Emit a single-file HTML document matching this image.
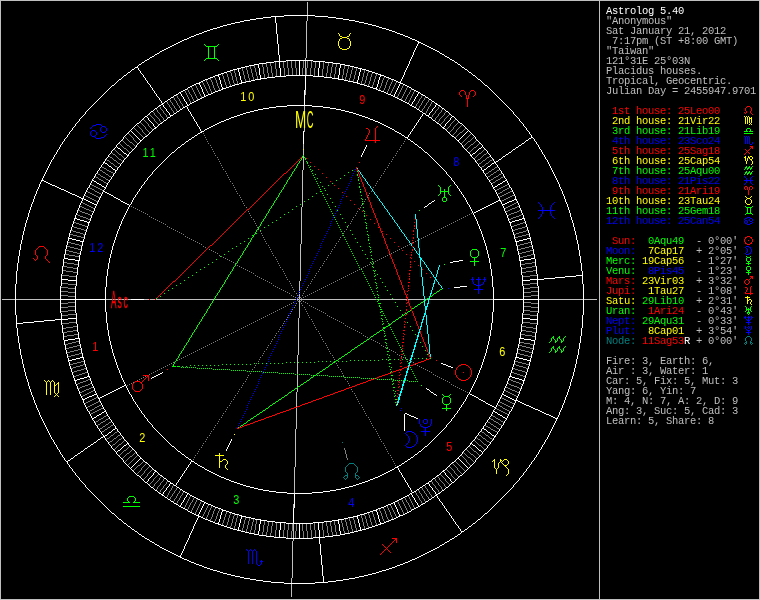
<!DOCTYPE html>
<html lang="en"><head><meta charset="utf-8"><title>Astrolog 5.40</title>
<style>
html,body{margin:0;padding:0;background:#000;}
body{width:760px;height:600px;position:relative;overflow:hidden;}
svg{will-change:transform;position:absolute;left:0;top:0;display:block}
#side{will-change:transform;position:absolute;left:605.5px;top:6.3px;width:154px;height:590px;font:10.5px/10px "Liberation Mono",monospace;letter-spacing:-0.3px;color:#bfbfbf;}
.ln{position:absolute;left:0;white-space:pre;height:10px;}
.cw{color:#ffffff}
.cl{color:#bfbfbf}
.cg{color:#7f7f7f}
.cr{color:#ff0000}
.cG{color:#00ff00}
.cy{color:#ffff00}
.cb{color:#0000ff}
.cc{color:#00ffff}
.cC{color:#007f7f}
.cm{color:#ff00ff}
.hn{font:13px "Liberation Sans",sans-serif;letter-spacing:2.29px}
.big{font-family:"Liberation Sans",sans-serif}
</style></head><body>
<svg width="760" height="600" viewBox="0 0 760 600" shape-rendering="crispEdges" fill="none" stroke-width="1">
<path stroke="#ffffff" d="M284 15.5h31M271 16.5h13M315 16.5h13M263 17.5h8M328 17.5h8M256 18.5h7M336 18.5h7M250 19.5h6M343 19.5h6M244 20.5h6M349 20.5h6M240 21.5h4M355 21.5h4M235 22.5h5M359 22.5h5M231 23.5h4M364 23.5h4M227 24.5h4M368 24.5h4M223 25.5h4M372 25.5h4M220 26.5h3M376 26.5h3M217 27.5h3M379 27.5h3M213 28.5h4M382 28.5h4M210 29.5h3M386 29.5h3M207 30.5h3M389 30.5h3M204 31.5h3M392 31.5h3M202 32.5h2M395 32.5h2M199 33.5h3M397 33.5h3M196 34.5h3M400 34.5h3M194 35.5h2M403 35.5h2M191 36.5h3M405 36.5h3M189 37.5h2M408 37.5h2M187 38.5h2M410 38.5h2M184 39.5h3M412 39.5h3M182 40.5h2M415 40.5h2M180 41.5h2M417 41.5h1M178 42.5h2M418 42.5h3M176 43.5h2M421 43.5h2M174 44.5h2M423 44.5h2M172 45.5h2M425 45.5h2M170 46.5h2M427 46.5h2M168 47.5h2M429 47.5h2M166 48.5h2M431 48.5h2M164 49.5h2M433 49.5h2M162 50.5h2M435 50.5h2M160 51.5h2M437 51.5h2M159 52.5h1M439 52.5h1M157 53.5h2M440 53.5h2M155 54.5h2M442 54.5h2M154 55.5h1M444 55.5h1M152 56.5h2M445 56.5h2M150 57.5h2M447 57.5h2M149 58.5h1M449 58.5h1M147 59.5h2M450 59.5h2M145 60.5h2M286 60.5h27M452 60.5h2M144 61.5h1M274 61.5h5M280 61.5h6M313 61.5h12M454 61.5h1M142 62.5h2M266 62.5h8M325 62.5h8M455 62.5h2M141 63.5h1M259 63.5h7M333 63.5h7M457 63.5h1M139 64.5h2M254 64.5h5M340 64.5h5M458 64.5h2M138 65.5h1M249 65.5h5M345 65.5h5M460 65.5h1M245 66.5h4M350 66.5h4M461 66.5h1M135 67.5h3M241 67.5h4M354 67.5h4M462 67.5h2M134 68.5h1M237 68.5h4M358 68.5h4M464 68.5h1M132 69.5h2M233 69.5h4M362 69.5h4M465 69.5h2M131 70.5h1M139 70.5h1M230 70.5h3M366 70.5h3M467 70.5h1M130 71.5h1M227 71.5h3M369 71.5h3M468 71.5h1M128 72.5h2M224 72.5h3M372 72.5h3M469 72.5h2M127 73.5h1M141 73.5h1M221 73.5h3M375 73.5h3M471 73.5h1M126 74.5h1M142 74.5h1M218 74.5h3M378 74.5h3M472 74.5h1M124 75.5h2M215 75.5h4M286 75.5h27M380 75.5h4M473 75.5h2M123 76.5h1M213 76.5h2M275 76.5h11M313 76.5h11M384 76.5h2M475 76.5h1M122 77.5h1M144 77.5h1M210 77.5h3M267 77.5h8M324 77.5h8M386 77.5h3M476 77.5h1M121 78.5h1M208 78.5h2M260 78.5h7M332 78.5h7M389 78.5h2M477 78.5h1M119 79.5h2M205 79.5h3M255 79.5h6M338 79.5h6M391 79.5h3M478 79.5h2M118 80.5h1M146 80.5h1M203 80.5h2M251 80.5h4M344 80.5h4M394 80.5h2M480 80.5h1M117 81.5h1M201 81.5h2M246 81.5h5M348 81.5h5M396 81.5h2M481 81.5h1M116 82.5h1M200 82.5h1M241 82.5h5M353 82.5h5M398 82.5h3M482 82.5h1M115 83.5h1M148 83.5h1M196 83.5h4M239 83.5h2M358 83.5h2M400 83.5h3M483 83.5h1M114 84.5h1M149 84.5h1M194 84.5h2M235 84.5h4M360 84.5h4M403 84.5h2M484 84.5h1M112 85.5h2M192 85.5h2M232 85.5h3M364 85.5h3M405 85.5h2M485 85.5h2M111 86.5h1M190 86.5h2M229 86.5h3M367 86.5h3M407 86.5h2M487 86.5h1M110 87.5h1M151 87.5h1M188 87.5h2M226 87.5h3M370 87.5h3M409 87.5h2M488 87.5h1M109 88.5h1M187 88.5h1M222 88.5h4M373 88.5h4M411 88.5h1M489 88.5h1M108 89.5h1M185 89.5h2M221 89.5h1M377 89.5h1M412 89.5h2M490 89.5h1M107 90.5h1M153 90.5h1M183 90.5h2M218 90.5h3M378 90.5h3M414 90.5h2M491 90.5h1M106 91.5h1M181 91.5h2M215 91.5h3M381 91.5h3M416 91.5h2M492 91.5h1M105 92.5h1M179 92.5h2M213 92.5h2M384 92.5h2M418 92.5h2M493 92.5h1M104 93.5h1M155 93.5h1M178 93.5h1M211 93.5h2M386 93.5h2M420 93.5h1M494 93.5h1M103 94.5h1M176 94.5h2M208 94.5h3M388 94.5h3M421 94.5h2M495 94.5h1M102 95.5h1M174 95.5h2M206 95.5h2M391 95.5h2M423 95.5h2M496 95.5h1M101 96.5h1M157 96.5h1M173 96.5h1M182 96.5h1M205 96.5h1M393 96.5h1M416 96.5h1M425 96.5h1M497 96.5h1M100 97.5h1M158 97.5h1M171 97.5h2M202 97.5h2M395 97.5h2M426 97.5h2M498 97.5h1M99 98.5h1M170 98.5h1M200 98.5h2M397 98.5h2M428 98.5h1M499 98.5h1M98 99.5h1M168 99.5h2M198 99.5h2M399 99.5h2M429 99.5h2M500 99.5h1M97 100.5h1M160 100.5h1M167 100.5h1M196 100.5h2M401 100.5h2M431 100.5h1M501 100.5h1M96 101.5h1M165 101.5h2M185 101.5h1M194 101.5h2M403 101.5h2M413 101.5h1M432 101.5h2M502 101.5h1M95 102.5h1M164 102.5h1M192 102.5h2M405 102.5h2M434 102.5h1M503 102.5h1M94 103.5h1M162 103.5h2M190 103.5h2M407 103.5h2M435 103.5h2M504 103.5h1M93 104.5h1M161 104.5h2M189 104.5h1M409 104.5h1M436 104.5h2M505 104.5h1M92 105.5h1M159 105.5h2M187 105.5h2M287 105.5h25M410 105.5h2M438 105.5h2M506 105.5h1M91 106.5h1M158 106.5h1M185 106.5h2M276 106.5h11M312 106.5h11M412 106.5h2M440 106.5h1M507 106.5h1M90 107.5h1M157 107.5h1M164 107.5h1M183 107.5h2M269 107.5h7M323 107.5h7M414 107.5h2M434 107.5h1M441 107.5h1M508 107.5h1M89 108.5h1M155 108.5h2M165 108.5h1M182 108.5h1M263 108.5h6M330 108.5h6M416 108.5h1M433 108.5h1M442 108.5h2M509 108.5h1M88 109.5h1M154 109.5h1M180 109.5h2M258 109.5h5M336 109.5h5M417 109.5h2M444 109.5h1M510 109.5h1M87 110.5h1M153 110.5h1M179 110.5h1M254 110.5h4M341 110.5h4M419 110.5h1M445 110.5h1M511 110.5h1M86 111.5h1M151 111.5h2M167 111.5h1M177 111.5h2M189 111.5h1M250 111.5h4M345 111.5h4M420 111.5h2M431 111.5h1M446 111.5h2M512 111.5h1M150 112.5h1M168 112.5h1M176 112.5h1M246 112.5h4M349 112.5h4M422 112.5h1M430 112.5h1M448 112.5h1M149 113.5h1M174 113.5h2M243 113.5h3M353 113.5h3M423 113.5h2M449 113.5h1M84 114.5h1M148 114.5h1M173 114.5h1M240 114.5h3M356 114.5h3M425 114.5h1M450 114.5h1M514 114.5h1M83 115.5h1M147 115.5h1M170 115.5h3M237 115.5h3M359 115.5h3M426 115.5h3M451 115.5h1M515 115.5h1M82 116.5h1M145 116.5h2M192 116.5h1M234 116.5h3M362 116.5h3M421 116.5h1M452 116.5h2M516 116.5h1M81 117.5h1M144 117.5h1M147 117.5h1M168 117.5h2M231 117.5h3M365 117.5h3M429 117.5h2M451 117.5h1M454 117.5h1M517 117.5h1M80 118.5h1M143 118.5h1M167 118.5h1M229 118.5h2M368 118.5h2M431 118.5h1M455 118.5h1M518 118.5h1M142 119.5h1M166 119.5h1M226 119.5h3M370 119.5h3M419 119.5h1M432 119.5h1M456 119.5h1M141 120.5h1M149 120.5h1M164 120.5h2M224 120.5h2M373 120.5h2M433 120.5h2M449 120.5h1M457 120.5h1M78 121.5h1M140 121.5h1M150 121.5h1M163 121.5h1M195 121.5h1M221 121.5h3M375 121.5h3M435 121.5h1M448 121.5h1M458 121.5h1M520 121.5h1M77 122.5h1M139 122.5h1M151 122.5h1M162 122.5h1M219 122.5h2M378 122.5h2M417 122.5h1M436 122.5h1M447 122.5h1M459 122.5h1M521 122.5h1M76 123.5h1M137 123.5h2M152 123.5h1M160 123.5h2M217 123.5h2M380 123.5h2M437 123.5h2M446 123.5h1M460 123.5h2M522 123.5h1M136 124.5h1M159 124.5h1M215 124.5h2M382 124.5h2M439 124.5h1M462 124.5h1M135 125.5h1M158 125.5h1M213 125.5h2M384 125.5h2M415 125.5h1M440 125.5h1M463 125.5h1M74 126.5h1M134 126.5h1M154 126.5h1M157 126.5h1M198 126.5h1M211 126.5h2M386 126.5h2M441 126.5h1M444 126.5h1M464 126.5h1M524 126.5h1M73 127.5h1M133 127.5h1M155 127.5h2M209 127.5h2M388 127.5h2M442 127.5h2M465 127.5h1M525 127.5h1M132 128.5h1M154 128.5h2M207 128.5h2M390 128.5h2M413 128.5h1M443 128.5h2M466 128.5h1M131 129.5h1M153 129.5h1M205 129.5h2M392 129.5h2M445 129.5h1M467 129.5h1M71 130.5h1M130 130.5h1M152 130.5h1M204 130.5h1M394 130.5h1M446 130.5h1M468 130.5h1M527 130.5h1M70 131.5h1M129 131.5h1M131 131.5h1M151 131.5h1M201 131.5h3M395 131.5h2M411 131.5h1M447 131.5h1M467 131.5h1M469 131.5h1M528 131.5h1M128 132.5h1M132 132.5h1M150 132.5h1M200 132.5h2M397 132.5h2M448 132.5h1M466 132.5h1M470 132.5h1M127 133.5h1M133 133.5h1M149 133.5h1M198 133.5h2M399 133.5h2M449 133.5h1M465 133.5h1M471 133.5h1M68 134.5h1M126 134.5h1M134 134.5h1M148 134.5h1M197 134.5h1M401 134.5h1M409 134.5h1M450 134.5h1M464 134.5h1M472 134.5h1M530 134.5h1M125 135.5h1M135 135.5h1M147 135.5h1M195 135.5h2M402 135.5h2M451 135.5h1M463 135.5h1M473 135.5h1M124 136.5h1M136 136.5h1M145 136.5h2M194 136.5h1M404 136.5h1M452 136.5h2M462 136.5h1M474 136.5h1M66 137.5h1M137 137.5h1M144 137.5h1M192 137.5h2M405 137.5h3M454 137.5h1M461 137.5h1M532 137.5h1M65 138.5h1M138 138.5h1M143 138.5h1M191 138.5h1M455 138.5h1M460 138.5h1M529 138.5h2M533 138.5h1M122 139.5h1M139 139.5h1M142 139.5h1M189 139.5h2M408 139.5h2M456 139.5h1M459 139.5h1M476 139.5h1M528 139.5h1M121 140.5h1M140 140.5h2M188 140.5h1M410 140.5h1M457 140.5h2M477 140.5h1M526 140.5h2M63 141.5h1M120 141.5h1M186 141.5h2M411 141.5h2M478 141.5h1M525 141.5h1M535 141.5h1M119 142.5h1M139 142.5h1M185 142.5h1M413 142.5h1M459 142.5h1M479 142.5h1M524 142.5h1M118 143.5h1M138 143.5h1M184 143.5h1M414 143.5h1M460 143.5h1M480 143.5h1M522 143.5h2M61 144.5h1M117 144.5h1M137 144.5h1M182 144.5h2M415 144.5h2M461 144.5h1M481 144.5h1M521 144.5h1M537 144.5h1M181 145.5h1M417 145.5h1M519 145.5h2M180 146.5h1M418 146.5h1M518 146.5h1M115 147.5h1M117 147.5h1M135 147.5h1M178 147.5h2M419 147.5h2M463 147.5h1M481 147.5h1M483 147.5h1M516 147.5h2M114 148.5h1M118 148.5h2M134 148.5h1M177 148.5h1M421 148.5h1M464 148.5h1M479 148.5h2M484 148.5h1M515 148.5h1M58 149.5h1M113 149.5h1M120 149.5h1M133 149.5h1M176 149.5h1M422 149.5h1M465 149.5h1M478 149.5h1M485 149.5h1M513 149.5h2M540 149.5h1M112 150.5h1M121 150.5h1M132 150.5h1M175 150.5h1M423 150.5h1M466 150.5h1M477 150.5h1M486 150.5h1M512 150.5h1M122 151.5h1M131 151.5h1M174 151.5h1M424 151.5h1M467 151.5h1M476 151.5h1M511 151.5h1M123 152.5h1M130 152.5h1M172 152.5h2M425 152.5h2M468 152.5h1M475 152.5h1M509 152.5h2M110 153.5h1M124 153.5h2M129 153.5h1M171 153.5h1M427 153.5h1M469 153.5h1M473 153.5h2M488 153.5h1M508 153.5h1M55 154.5h1M109 154.5h1M126 154.5h1M170 154.5h1M428 154.5h1M472 154.5h1M489 154.5h1M506 154.5h2M543 154.5h1M127 155.5h2M169 155.5h1M429 155.5h1M470 155.5h2M505 155.5h1M168 156.5h1M430 156.5h1M503 156.5h2M107 157.5h1M126 157.5h1M167 157.5h1M431 157.5h1M472 157.5h1M491 157.5h1M502 157.5h1M106 158.5h1M125 158.5h1M166 158.5h1M432 158.5h1M473 158.5h1M492 158.5h1M501 158.5h1M52 159.5h1M124 159.5h1M165 159.5h1M433 159.5h1M474 159.5h1M499 159.5h2M546 159.5h1M164 160.5h1M434 160.5h1M498 160.5h1M163 161.5h1M435 161.5h1M496 161.5h2M103 162.5h2M122 162.5h1M162 162.5h1M436 162.5h1M476 162.5h1M494 162.5h2M105 163.5h2M121 163.5h1M161 163.5h1M437 163.5h1M477 163.5h1M492 163.5h2M102 164.5h1M107 164.5h1M160 164.5h1M438 164.5h1M491 164.5h1M496 164.5h1M108 165.5h1M159 165.5h1M439 165.5h1M490 165.5h1M109 166.5h2M119 166.5h1M158 166.5h1M440 166.5h1M479 166.5h1M488 166.5h2M100 167.5h1M111 167.5h1M118 167.5h1M157 167.5h1M441 167.5h1M480 167.5h1M487 167.5h1M498 167.5h1M112 168.5h1M156 168.5h1M442 168.5h1M486 168.5h1M113 169.5h2M155 169.5h1M443 169.5h1M484 169.5h2M98 170.5h1M116 170.5h1M154 170.5h1M444 170.5h1M482 170.5h1M500 170.5h1M153 171.5h1M445 171.5h1M96 173.5h1M114 173.5h1M484 173.5h1M502 173.5h1M151 174.5h1M447 174.5h1M150 175.5h1M448 175.5h1M112 176.5h1M149 176.5h1M449 176.5h1M486 176.5h1M148 177.5h1M450 177.5h1M93 178.5h1M505 178.5h1M110 179.5h1M488 179.5h1M41 180.5h3M92 180.5h2M146 180.5h1M452 180.5h1M505 180.5h2M44 181.5h2M94 181.5h2M145 181.5h1M453 181.5h1M503 181.5h2M46 182.5h2M96 182.5h1M108 182.5h1M490 182.5h1M502 182.5h1M48 183.5h2M97 183.5h2M500 183.5h2M50 184.5h2M99 184.5h2M143 184.5h1M455 184.5h1M498 184.5h2M52 185.5h3M101 185.5h1M142 185.5h1M456 185.5h1M497 185.5h1M55 186.5h2M102 186.5h2M495 186.5h2M57 187.5h2M88 187.5h1M104 187.5h2M493 187.5h2M510 187.5h1M59 188.5h2M140 188.5h1M458 188.5h1M61 189.5h3M104 189.5h1M494 189.5h1M64 190.5h2M66 191.5h2M103 191.5h2M138 191.5h1M460 191.5h1M68 192.5h2M105 192.5h2M70 193.5h2M107 193.5h2M72 194.5h3M109 194.5h2M136 194.5h1M462 194.5h1M75 195.5h2M111 195.5h2M77 196.5h2M113 196.5h1M79 197.5h2M114 197.5h2M134 197.5h1M464 197.5h1M81 198.5h3M116 198.5h2M84 199.5h2M118 199.5h2M514 199.5h1M516 199.5h1M86 200.5h2M120 200.5h1M434 200.5h1M498 200.5h3M512 200.5h2M88 201.5h2M121 201.5h2M432 201.5h2M496 201.5h2M509 201.5h3M90 202.5h2M123 202.5h2M431 202.5h1M494 202.5h2M507 202.5h2M92 203.5h2M125 203.5h2M429 203.5h2M492 203.5h2M505 203.5h2M94 204.5h3M127 204.5h2M130 204.5h1M428 204.5h1M468 204.5h1M490 204.5h2M502 204.5h3M427 205.5h1M488 205.5h2M425 206.5h2M486 206.5h2M424 207.5h1M484 207.5h2M482 208.5h2M480 209.5h2M478 210.5h2M476 211.5h2M474 212.5h2M74 218.5h1M76 218.5h1M522 218.5h1M524 218.5h1M77 219.5h3M519 219.5h3M80 220.5h4M515 220.5h4M84 221.5h3M512 221.5h3M87 222.5h1M89 222.5h1M509 222.5h1M511 222.5h1M68 238.5h4M527 238.5h4M72 239.5h4M523 239.5h4M76 240.5h4M519 240.5h4M80 241.5h2M83 241.5h1M515 241.5h1M517 241.5h2M65 258.5h3M531 258.5h3M68 259.5h7M524 259.5h7M75 260.5h3M459 260.5h4M521 260.5h3M453 261.5h6M450 262.5h3M576 275.5h6M565 276.5h11M555 277.5h10M544 278.5h11M62 279.5h6M530 279.5h14M68 280.5h8M523 280.5h7M460 286.5h7M454 287.5h6M60 299.5h46M131 299.5h13M493 299.5h46M68 318.5h8M523 318.5h7M55 319.5h13M530 319.5h7M44 320.5h11M34 321.5h10M23 322.5h11M17 323.5h6M75 338.5h3M521 338.5h3M68 339.5h7M524 339.5h7M65 340.5h3M531 340.5h3M80 357.5h2M83 357.5h1M515 357.5h1M517 357.5h2M76 358.5h4M519 358.5h4M72 359.5h4M523 359.5h4M68 360.5h4M527 360.5h4M441 363.5h2M443 364.5h3M446 365.5h2M448 366.5h3M451 367.5h2M162 372.5h1M160 373.5h2M158 374.5h2M156 375.5h2M87 376.5h1M89 376.5h1M154 376.5h2M509 376.5h1M511 376.5h1M84 377.5h3M152 377.5h2M512 377.5h3M80 378.5h4M151 378.5h1M515 378.5h4M77 379.5h3M519 379.5h3M74 380.5h1M76 380.5h1M522 380.5h1M524 380.5h1M124 385.5h2M122 386.5h2M120 387.5h2M118 388.5h2M426 388.5h1M116 389.5h2M427 389.5h2M114 390.5h2M429 390.5h1M112 391.5h2M430 391.5h1M110 392.5h2M431 392.5h2M108 393.5h2M433 393.5h1M94 394.5h3M106 394.5h2M130 394.5h1M434 394.5h2M468 394.5h1M470 394.5h2M502 394.5h2M92 395.5h2M104 395.5h2M436 395.5h1M472 395.5h2M504 395.5h2M89 396.5h3M102 396.5h2M474 396.5h2M506 396.5h2M87 397.5h2M100 397.5h2M476 397.5h2M508 397.5h2M85 398.5h2M98 398.5h1M478 398.5h1M510 398.5h2M82 399.5h1M84 399.5h1M479 399.5h2M512 399.5h2M481 400.5h2M514 400.5h4M134 401.5h1M464 401.5h1M483 401.5h2M518 401.5h2M485 402.5h1M520 402.5h2M486 403.5h2M522 403.5h2M136 404.5h1M462 404.5h1M488 404.5h2M524 404.5h2M490 405.5h2M526 405.5h3M492 406.5h2M529 406.5h2M138 407.5h1M460 407.5h1M494 407.5h2M531 407.5h2M533 408.5h2M104 409.5h1M494 409.5h1M535 409.5h3M140 410.5h1M458 410.5h1M538 410.5h2M88 411.5h1M104 411.5h2M493 411.5h2M510 411.5h1M540 411.5h2M102 412.5h2M495 412.5h2M542 412.5h2M101 413.5h1M142 413.5h1M405 413.5h2M456 413.5h1M497 413.5h1M544 413.5h2M99 414.5h2M143 414.5h1M407 414.5h2M455 414.5h1M498 414.5h2M546 414.5h3M97 415.5h2M409 415.5h2M500 415.5h2M549 415.5h2M96 416.5h1M108 416.5h1M411 416.5h3M490 416.5h1M502 416.5h1M551 416.5h2M94 417.5h2M145 417.5h1M414 417.5h2M453 417.5h1M503 417.5h2M553 417.5h2M92 418.5h2M146 418.5h1M416 418.5h2M452 418.5h1M505 418.5h2M555 418.5h3M110 419.5h1M488 419.5h1M93 420.5h1M505 420.5h1M148 421.5h1M450 421.5h1M112 422.5h1M149 422.5h1M449 422.5h1M486 422.5h1M150 423.5h1M448 423.5h1M151 424.5h1M447 424.5h1M96 425.5h1M114 425.5h1M484 425.5h1M502 425.5h1M153 427.5h1M445 427.5h1M98 428.5h1M116 428.5h1M154 428.5h1M444 428.5h1M482 428.5h1M500 428.5h1M113 429.5h2M155 429.5h1M443 429.5h1M484 429.5h2M112 430.5h1M156 430.5h1M442 430.5h1M486 430.5h1M100 431.5h1M111 431.5h1M118 431.5h1M157 431.5h1M441 431.5h1M480 431.5h1M487 431.5h1M498 431.5h1M109 432.5h2M119 432.5h1M158 432.5h1M440 432.5h1M479 432.5h1M488 432.5h2M108 433.5h1M159 433.5h1M439 433.5h1M490 433.5h1M102 434.5h1M107 434.5h1M160 434.5h1M438 434.5h1M491 434.5h1M496 434.5h1M105 435.5h2M121 435.5h1M161 435.5h1M437 435.5h1M477 435.5h1M492 435.5h2M103 436.5h2M122 436.5h1M162 436.5h1M436 436.5h1M476 436.5h1M494 436.5h2M101 437.5h2M163 437.5h1M435 437.5h1M100 438.5h1M164 438.5h1M434 438.5h1M52 439.5h1M98 439.5h2M124 439.5h1M165 439.5h1M433 439.5h1M474 439.5h1M546 439.5h1M97 440.5h1M106 440.5h1M125 440.5h1M166 440.5h1M432 440.5h1M473 440.5h1M492 440.5h1M96 441.5h1M107 441.5h1M126 441.5h1M167 441.5h1M431 441.5h1M472 441.5h1M491 441.5h1M94 442.5h2M168 442.5h1M430 442.5h1M93 443.5h1M127 443.5h2M169 443.5h1M429 443.5h1M470 443.5h2M55 444.5h1M91 444.5h2M109 444.5h1M126 444.5h1M170 444.5h1M428 444.5h1M472 444.5h1M489 444.5h1M543 444.5h1M90 445.5h1M110 445.5h1M124 445.5h2M129 445.5h1M171 445.5h1M427 445.5h1M469 445.5h1M473 445.5h2M488 445.5h1M88 446.5h2M123 446.5h1M130 446.5h1M172 446.5h2M425 446.5h2M468 446.5h1M475 446.5h1M87 447.5h1M122 447.5h1M131 447.5h1M174 447.5h1M424 447.5h1M467 447.5h1M476 447.5h1M85 448.5h2M112 448.5h1M121 448.5h1M132 448.5h1M175 448.5h1M423 448.5h1M466 448.5h1M477 448.5h1M486 448.5h1M58 449.5h1M84 449.5h1M113 449.5h1M120 449.5h1M133 449.5h1M176 449.5h1M422 449.5h1M465 449.5h1M478 449.5h1M485 449.5h1M540 449.5h1M83 450.5h1M114 450.5h1M118 450.5h2M134 450.5h1M177 450.5h1M421 450.5h1M464 450.5h1M479 450.5h2M484 450.5h1M81 451.5h2M115 451.5h1M117 451.5h1M135 451.5h1M178 451.5h2M419 451.5h2M463 451.5h1M481 451.5h1M483 451.5h1M80 452.5h1M180 452.5h1M418 452.5h1M78 453.5h2M181 453.5h1M417 453.5h1M61 454.5h1M77 454.5h1M117 454.5h1M137 454.5h1M182 454.5h2M415 454.5h2M461 454.5h1M481 454.5h1M537 454.5h1M75 455.5h2M118 455.5h1M138 455.5h1M184 455.5h1M414 455.5h1M460 455.5h1M480 455.5h1M74 456.5h1M119 456.5h1M139 456.5h1M185 456.5h1M413 456.5h1M459 456.5h1M479 456.5h1M63 457.5h1M73 457.5h1M120 457.5h1M186 457.5h2M411 457.5h2M478 457.5h1M535 457.5h1M71 458.5h2M121 458.5h1M140 458.5h2M188 458.5h1M410 458.5h1M457 458.5h2M477 458.5h1M70 459.5h1M122 459.5h1M139 459.5h1M142 459.5h1M189 459.5h2M408 459.5h2M456 459.5h1M459 459.5h1M476 459.5h1M65 460.5h1M68 460.5h2M138 460.5h1M143 460.5h1M407 460.5h1M455 460.5h1M460 460.5h1M533 460.5h1M66 461.5h1M137 461.5h1M144 461.5h1M191 461.5h3M405 461.5h2M454 461.5h1M461 461.5h1M532 461.5h1M124 462.5h1M136 462.5h1M145 462.5h2M194 462.5h1M404 462.5h1M452 462.5h2M462 462.5h1M474 462.5h1M125 463.5h1M135 463.5h1M147 463.5h1M195 463.5h2M402 463.5h2M451 463.5h1M463 463.5h1M473 463.5h1M68 464.5h1M126 464.5h1M134 464.5h1M148 464.5h1M189 464.5h1M197 464.5h1M401 464.5h1M450 464.5h1M464 464.5h1M472 464.5h1M530 464.5h1M127 465.5h1M133 465.5h1M149 465.5h1M198 465.5h2M399 465.5h2M449 465.5h1M465 465.5h1M471 465.5h1M128 466.5h1M132 466.5h1M150 466.5h1M200 466.5h2M397 466.5h2M448 466.5h1M466 466.5h1M470 466.5h1M70 467.5h1M129 467.5h1M131 467.5h1M151 467.5h1M187 467.5h1M202 467.5h2M395 467.5h3M447 467.5h1M467 467.5h1M469 467.5h1M528 467.5h1M71 468.5h1M130 468.5h1M152 468.5h1M204 468.5h1M394 468.5h1M446 468.5h1M468 468.5h1M527 468.5h1M131 469.5h1M153 469.5h1M205 469.5h2M392 469.5h2M445 469.5h1M467 469.5h1M132 470.5h1M154 470.5h2M185 470.5h1M207 470.5h2M390 470.5h2M443 470.5h2M466 470.5h1M73 471.5h1M133 471.5h1M155 471.5h2M209 471.5h2M388 471.5h2M442 471.5h2M465 471.5h1M525 471.5h1M74 472.5h1M134 472.5h1M154 472.5h1M157 472.5h1M211 472.5h2M386 472.5h2M400 472.5h1M441 472.5h1M444 472.5h1M464 472.5h1M524 472.5h1M135 473.5h1M158 473.5h1M183 473.5h1M213 473.5h2M384 473.5h2M440 473.5h1M463 473.5h1M136 474.5h1M159 474.5h1M215 474.5h2M382 474.5h2M439 474.5h1M462 474.5h1M76 475.5h1M137 475.5h2M152 475.5h1M160 475.5h2M217 475.5h2M380 475.5h2M437 475.5h2M446 475.5h1M460 475.5h2M522 475.5h1M77 476.5h1M139 476.5h1M151 476.5h1M162 476.5h1M181 476.5h1M219 476.5h2M378 476.5h2M436 476.5h1M447 476.5h1M459 476.5h1M521 476.5h1M78 477.5h1M140 477.5h1M150 477.5h1M163 477.5h1M221 477.5h3M375 477.5h3M403 477.5h1M435 477.5h1M448 477.5h1M458 477.5h1M520 477.5h1M141 478.5h1M149 478.5h1M164 478.5h2M224 478.5h2M373 478.5h2M433 478.5h2M449 478.5h1M457 478.5h1M142 479.5h1M166 479.5h1M179 479.5h1M226 479.5h3M370 479.5h3M432 479.5h1M456 479.5h1M80 480.5h1M143 480.5h1M167 480.5h1M229 480.5h2M368 480.5h2M431 480.5h1M455 480.5h1M518 480.5h1M81 481.5h1M144 481.5h1M147 481.5h1M168 481.5h2M231 481.5h3M365 481.5h3M429 481.5h2M451 481.5h1M454 481.5h1M517 481.5h1M82 482.5h1M145 482.5h2M177 482.5h1M234 482.5h3M362 482.5h3M406 482.5h1M452 482.5h2M516 482.5h1M83 483.5h1M147 483.5h1M170 483.5h3M237 483.5h3M359 483.5h3M426 483.5h3M451 483.5h1M515 483.5h1M84 484.5h1M148 484.5h1M173 484.5h1M240 484.5h3M356 484.5h3M425 484.5h1M450 484.5h1M514 484.5h1M149 485.5h1M174 485.5h2M243 485.5h3M353 485.5h3M423 485.5h2M449 485.5h1M150 486.5h1M168 486.5h1M176 486.5h1M246 486.5h4M349 486.5h4M422 486.5h1M430 486.5h1M448 486.5h1M86 487.5h1M151 487.5h2M167 487.5h1M177 487.5h2M250 487.5h4M345 487.5h4M409 487.5h1M420 487.5h2M431 487.5h1M446 487.5h2M512 487.5h1M87 488.5h1M153 488.5h1M179 488.5h1M254 488.5h4M341 488.5h4M419 488.5h1M445 488.5h1M511 488.5h1M88 489.5h1M154 489.5h1M180 489.5h2M258 489.5h5M336 489.5h5M417 489.5h2M444 489.5h1M510 489.5h1M89 490.5h1M155 490.5h2M165 490.5h1M182 490.5h1M263 490.5h6M330 490.5h6M416 490.5h1M433 490.5h1M442 490.5h2M509 490.5h1M90 491.5h1M157 491.5h1M164 491.5h1M183 491.5h2M269 491.5h7M323 491.5h7M414 491.5h2M434 491.5h1M441 491.5h1M508 491.5h1M91 492.5h1M158 492.5h1M185 492.5h2M276 492.5h11M312 492.5h11M412 492.5h2M440 492.5h1M507 492.5h1M92 493.5h1M159 493.5h2M187 493.5h2M287 493.5h25M410 493.5h2M438 493.5h2M506 493.5h1M93 494.5h1M161 494.5h2M189 494.5h1M409 494.5h1M436 494.5h2M505 494.5h1M94 495.5h1M162 495.5h2M190 495.5h2M407 495.5h2M435 495.5h2M504 495.5h1M95 496.5h1M164 496.5h1M192 496.5h2M405 496.5h2M434 496.5h1M503 496.5h1M96 497.5h1M165 497.5h2M185 497.5h1M194 497.5h2M403 497.5h2M413 497.5h1M432 497.5h2M502 497.5h1M97 498.5h1M167 498.5h1M196 498.5h2M401 498.5h2M431 498.5h1M438 498.5h1M501 498.5h1M98 499.5h1M168 499.5h2M198 499.5h2M399 499.5h2M429 499.5h2M500 499.5h1M99 500.5h1M170 500.5h1M200 500.5h2M397 500.5h2M428 500.5h1M499 500.5h1M100 501.5h1M171 501.5h2M202 501.5h2M395 501.5h2M426 501.5h2M440 501.5h1M498 501.5h1M101 502.5h1M173 502.5h1M182 502.5h1M204 502.5h2M393 502.5h1M416 502.5h1M425 502.5h1M441 502.5h1M497 502.5h1M102 503.5h1M174 503.5h2M206 503.5h2M391 503.5h2M423 503.5h2M496 503.5h1M103 504.5h1M176 504.5h2M208 504.5h3M388 504.5h3M421 504.5h2M495 504.5h1M104 505.5h1M178 505.5h1M211 505.5h2M386 505.5h2M420 505.5h1M443 505.5h1M494 505.5h1M105 506.5h1M179 506.5h2M213 506.5h2M384 506.5h2M418 506.5h2M493 506.5h1M106 507.5h1M181 507.5h2M215 507.5h3M381 507.5h3M416 507.5h2M492 507.5h1M107 508.5h1M183 508.5h2M218 508.5h3M378 508.5h3M414 508.5h2M445 508.5h1M491 508.5h1M108 509.5h1M185 509.5h2M221 509.5h1M377 509.5h1M412 509.5h2M490 509.5h1M109 510.5h1M187 510.5h1M222 510.5h4M373 510.5h4M411 510.5h1M489 510.5h1M110 511.5h1M188 511.5h2M226 511.5h3M370 511.5h3M409 511.5h2M447 511.5h1M488 511.5h1M111 512.5h1M190 512.5h2M229 512.5h3M367 512.5h3M407 512.5h2M448 512.5h1M487 512.5h1M112 513.5h2M192 513.5h2M232 513.5h3M364 513.5h3M405 513.5h2M485 513.5h2M114 514.5h1M194 514.5h2M235 514.5h4M360 514.5h4M403 514.5h2M484 514.5h1M115 515.5h1M196 515.5h2M239 515.5h2M358 515.5h2M399 515.5h4M450 515.5h1M483 515.5h1M116 516.5h1M199 516.5h2M241 516.5h5M353 516.5h5M398 516.5h1M482 516.5h1M117 517.5h1M201 517.5h2M246 517.5h5M348 517.5h5M396 517.5h2M481 517.5h1M118 518.5h1M203 518.5h2M251 518.5h4M344 518.5h4M394 518.5h2M452 518.5h1M480 518.5h1M119 519.5h2M205 519.5h3M255 519.5h6M338 519.5h6M391 519.5h3M478 519.5h2M121 520.5h1M208 520.5h2M260 520.5h7M332 520.5h7M389 520.5h2M477 520.5h1M122 521.5h1M210 521.5h3M267 521.5h8M324 521.5h8M386 521.5h3M454 521.5h1M476 521.5h1M123 522.5h1M213 522.5h2M275 522.5h11M313 522.5h11M384 522.5h2M475 522.5h1M124 523.5h2M215 523.5h4M286 523.5h27M380 523.5h4M473 523.5h2M126 524.5h1M218 524.5h3M378 524.5h3M456 524.5h1M472 524.5h1M127 525.5h1M221 525.5h3M375 525.5h3M457 525.5h1M471 525.5h1M128 526.5h2M224 526.5h3M372 526.5h3M469 526.5h2M130 527.5h1M227 527.5h3M369 527.5h3M468 527.5h1M131 528.5h1M230 528.5h3M366 528.5h3M459 528.5h1M467 528.5h1M132 529.5h2M233 529.5h4M362 529.5h4M465 529.5h2M134 530.5h1M237 530.5h4M358 530.5h4M464 530.5h1M135 531.5h2M241 531.5h4M354 531.5h4M461 531.5h3M137 532.5h1M245 532.5h4M350 532.5h4M138 533.5h1M249 533.5h5M345 533.5h5M460 533.5h1M139 534.5h2M254 534.5h5M340 534.5h5M458 534.5h2M141 535.5h1M259 535.5h7M333 535.5h7M457 535.5h1M142 536.5h2M266 536.5h8M325 536.5h8M455 536.5h2M144 537.5h1M274 537.5h12M313 537.5h6M320 537.5h5M454 537.5h1M145 538.5h2M286 538.5h27M452 538.5h2M147 539.5h2M450 539.5h2M149 540.5h1M449 540.5h1M150 541.5h2M447 541.5h2M152 542.5h2M445 542.5h2M154 543.5h1M444 543.5h1M155 544.5h2M442 544.5h2M157 545.5h2M440 545.5h2M159 546.5h1M439 546.5h1M160 547.5h2M437 547.5h2M162 548.5h2M435 548.5h2M164 549.5h2M433 549.5h2M166 550.5h2M431 550.5h2M168 551.5h2M429 551.5h2M170 552.5h2M427 552.5h2M172 553.5h2M425 553.5h2M174 554.5h2M423 554.5h2M176 555.5h2M421 555.5h2M178 556.5h3M419 556.5h2M181 557.5h1M417 557.5h2M182 558.5h2M415 558.5h2M184 559.5h3M412 559.5h3M187 560.5h2M410 560.5h2M189 561.5h2M408 561.5h2M191 562.5h3M405 562.5h3M194 563.5h2M403 563.5h2M196 564.5h3M400 564.5h3M199 565.5h3M397 565.5h3M202 566.5h2M395 566.5h2M204 567.5h3M392 567.5h3M207 568.5h3M389 568.5h3M210 569.5h3M386 569.5h3M213 570.5h4M382 570.5h4M217 571.5h3M379 571.5h3M220 572.5h3M376 572.5h3M223 573.5h4M372 573.5h4M227 574.5h4M368 574.5h4M231 575.5h4M364 575.5h4M235 576.5h5M359 576.5h5M240 577.5h4M355 577.5h4M244 578.5h6M349 578.5h6M250 579.5h6M343 579.5h6M256 580.5h7M336 580.5h7M263 581.5h8M328 581.5h8M271 582.5h13M315 582.5h13M284 583.5h31M15.5 284v31M16.5 271v13M16.5 315v13M17.5 263v8M17.5 328v8M18.5 256v7M18.5 336v7M19.5 250v6M19.5 343v6M20.5 244v6M20.5 349v6M21.5 240v4M21.5 355v4M22.5 235v5M22.5 359v5M23.5 231v4M23.5 364v4M24.5 227v4M24.5 368v4M25.5 223v4M25.5 372v4M26.5 220v3M26.5 376v3M27.5 217v3M27.5 379v3M28.5 213v4M28.5 382v4M29.5 210v3M29.5 386v3M30.5 207v3M30.5 389v3M31.5 204v3M31.5 392v3M32.5 202v2M32.5 395v2M33.5 199v3M33.5 397v3M34.5 196v3M34.5 400v3M35.5 194v2M35.5 403v2M36.5 191v3M36.5 405v3M37.5 189v2M37.5 408v2M38.5 187v2M38.5 410v2M39.5 184v3M39.5 412v3M40.5 182v2M40.5 415v2M41.5 181v1M41.5 417v2M42.5 178v2M42.5 419v2M43.5 176v2M43.5 421v2M44.5 174v2M44.5 423v2M45.5 172v2M45.5 425v2M46.5 170v2M46.5 427v2M47.5 168v2M47.5 429v2M48.5 166v2M48.5 431v2M49.5 164v2M49.5 433v2M50.5 162v2M50.5 435v2M51.5 160v2M51.5 437v2M53.5 157v2M53.5 440v2M54.5 155v2M54.5 442v2M56.5 152v2M56.5 445v2M57.5 150v2M57.5 447v2M59.5 147v2M59.5 450v2M60.5 145v2M60.5 286v13M60.5 300v13M60.5 452v2M61.5 274v12M61.5 313v6M61.5 320v5M62.5 142v2M62.5 266v8M62.5 325v8M62.5 455v2M63.5 259v7M63.5 333v7M64.5 139v2M64.5 254v5M64.5 340v5M64.5 458v2M65.5 249v5M65.5 345v5M66.5 245v4M66.5 350v4M67.5 135v2M67.5 241v4M67.5 354v4M67.5 461v3M68.5 237v1M68.5 239v2M68.5 358v2M68.5 361v1M69.5 132v2M69.5 233v4M69.5 362v4M69.5 465v2M70.5 230v3M70.5 366v3M71.5 227v3M71.5 369v3M72.5 128v2M72.5 224v3M72.5 372v3M72.5 469v2M73.5 221v3M73.5 375v3M74.5 219v2M74.5 378v2M75.5 124v2M75.5 215v4M75.5 286v13M75.5 300v13M75.5 380v4M75.5 473v2M76.5 213v2M76.5 275v11M76.5 313v11M76.5 384v2M77.5 210v3M77.5 267v8M77.5 324v8M77.5 386v3M78.5 208v2M78.5 260v7M78.5 332v7M78.5 389v2M79.5 119v2M79.5 205v3M79.5 255v6M79.5 338v6M79.5 391v3M79.5 478v2M80.5 203v2M80.5 251v4M80.5 344v4M80.5 394v2M81.5 201v2M81.5 246v5M81.5 348v5M81.5 396v2M82.5 199v2M82.5 241v5M82.5 353v5M82.5 398v1M83.5 196v2M83.5 239v2M83.5 358v2M83.5 399v4M84.5 194v2M84.5 235v4M84.5 360v4M84.5 403v2M85.5 112v2M85.5 192v2M85.5 232v3M85.5 364v3M85.5 405v2M85.5 485v2M86.5 190v2M86.5 229v3M86.5 367v3M86.5 407v2M87.5 188v2M87.5 226v3M87.5 370v3M87.5 409v2M88.5 222v4M88.5 373v4M89.5 185v2M89.5 221v1M89.5 377v1M89.5 412v2M90.5 183v2M90.5 218v3M90.5 378v3M90.5 414v2M91.5 181v2M91.5 215v3M91.5 381v3M91.5 416v2M92.5 179v1M92.5 213v2M92.5 384v2M92.5 419v1M93.5 211v2M93.5 386v2M94.5 176v2M94.5 208v3M94.5 388v3M94.5 421v2M95.5 174v2M95.5 206v2M95.5 391v2M95.5 423v2M96.5 205v1M96.5 393v1M97.5 171v2M97.5 202v2M97.5 395v2M97.5 426v2M98.5 200v2M98.5 397v1M99.5 168v2M99.5 198v2M99.5 398v3M99.5 429v2M100.5 196v2M100.5 401v2M101.5 165v2M101.5 194v2M101.5 403v2M101.5 432v2M102.5 192v2M102.5 405v2M103.5 163v1M103.5 190v1M103.5 407v2M103.5 435v1M104.5 161v1M104.5 437v1M105.5 159v2M105.5 188v1M105.5 287v12M105.5 300v12M105.5 410v1M105.5 438v2M106.5 185v2M106.5 276v11M106.5 312v11M106.5 412v2M107.5 183v2M107.5 269v7M107.5 323v7M107.5 414v2M108.5 155v2M108.5 263v6M108.5 330v6M108.5 442v2M109.5 180v2M109.5 258v5M109.5 336v5M109.5 417v2M110.5 254v4M110.5 341v4M111.5 151v2M111.5 177v2M111.5 250v4M111.5 345v4M111.5 420v2M111.5 446v2M112.5 246v4M112.5 349v4M113.5 174v2M113.5 243v3M113.5 353v3M113.5 423v2M114.5 240v3M114.5 356v3M115.5 170v3M115.5 237v3M115.5 359v3M115.5 426v3M116.5 145v2M116.5 234v3M116.5 362v3M116.5 452v2M117.5 168v2M117.5 231v3M117.5 365v3M117.5 429v2M118.5 229v2M118.5 368v2M119.5 226v3M119.5 370v3M120.5 164v2M120.5 224v2M120.5 373v2M120.5 433v2M121.5 221v3M121.5 375v3M122.5 219v2M122.5 378v2M123.5 137v2M123.5 160v2M123.5 217v2M123.5 380v2M123.5 437v2M123.5 460v2M124.5 215v2M124.5 382v2M125.5 213v2M125.5 384v1M126.5 211v2M126.5 386v2M127.5 156v1M127.5 209v2M127.5 388v2M127.5 442v1M128.5 154v1M128.5 207v2M128.5 390v2M128.5 444v1M129.5 205v2M129.5 392v2M131.5 202v2M131.5 395v2M132.5 200v2M132.5 397v2M133.5 198v2M133.5 399v2M135.5 195v2M135.5 402v2M136.5 145v2M136.5 452v2M137.5 66v1M137.5 192v2M137.5 405v2M138.5 68v2M139.5 189v2M139.5 408v2M140.5 71v2M140.5 141v1M140.5 457v1M141.5 186v2M141.5 411v2M143.5 75v2M144.5 182v2M144.5 415v2M145.5 78v2M147.5 81v2M147.5 178v2M147.5 419v2M148.5 118v2M148.5 479v2M150.5 85v2M152.5 88v2M152.5 172v2M152.5 425v2M153.5 124v2M153.5 473v2M154.5 91v2M156.5 94v2M159.5 98v2M161.5 101v2M163.5 105v2M163.5 492v2M166.5 109v2M166.5 488v2M169.5 113v2M169.5 484v2M170.5 116v1M170.5 482v1M176.5 483v2M178.5 480v2M180.5 93v1M180.5 477v2M180.5 505v1M180.5 555v1M180.5 557v1M181.5 94v2M181.5 503v2M181.5 553v2M182.5 474v2M182.5 551v2M183.5 97v2M183.5 500v2M183.5 549v2M184.5 99v2M184.5 471v2M184.5 498v2M184.5 546v3M185.5 544v2M186.5 102v2M186.5 468v2M186.5 495v2M186.5 542v2M187.5 104v1M187.5 107v2M187.5 494v1M187.5 540v2M188.5 109v2M188.5 465v2M188.5 538v2M189.5 535v3M190.5 112v2M190.5 462v2M190.5 533v2M191.5 114v2M191.5 460v1M191.5 531v2M192.5 529v2M193.5 117v2M193.5 526v3M194.5 119v2M194.5 524v2M195.5 522v2M196.5 122v2M196.5 520v2M197.5 124v2M197.5 518v2M198.5 514v4M199.5 82v1M199.5 84v1M199.5 127v2M199.5 512v2M200.5 85v2M200.5 129v2M200.5 510v2M201.5 87v2M201.5 508v2M202.5 89v3M202.5 506v2M203.5 92v2M203.5 504v2M204.5 94v3M204.5 503v1M218.5 76v1M218.5 522v1M219.5 77v3M219.5 519v3M220.5 80v4M220.5 515v4M221.5 84v3M221.5 512v3M222.5 87v1M222.5 89v1M222.5 509v1M222.5 511v1M226.5 449v2M227.5 447v2M228.5 445v2M229.5 443v2M230.5 441v2M231.5 439v2M238.5 69v3M238.5 527v3M239.5 72v4M239.5 523v4M240.5 76v4M240.5 519v4M241.5 80v2M241.5 83v1M241.5 515v1M241.5 517v2M258.5 65v3M258.5 531v3M259.5 68v7M259.5 524v7M260.5 75v3M260.5 521v3M275.5 17v6M276.5 23v11M277.5 34v10M278.5 44v11M279.5 55v13M279.5 530v7M280.5 68v8M280.5 523v7M293.5 508v15M294.5 494v14M299.5 61v14M299.5 524v14M303.5 131v13M304.5 90v15M305.5 76v14M318.5 68v8M318.5 523v7M319.5 62v6M319.5 530v14M320.5 544v11M321.5 555v10M322.5 565v11M323.5 576v6M338.5 75v3M338.5 521v3M339.5 68v7M339.5 524v7M340.5 65v3M340.5 531v3M357.5 80v2M357.5 83v1M357.5 515v1M357.5 517v2M358.5 76v4M358.5 519v4M359.5 72v4M359.5 523v4M360.5 69v3M360.5 527v3M361.5 155v2M362.5 153v2M363.5 151v2M364.5 149v2M365.5 147v2M366.5 145v2M376.5 87v1M376.5 89v1M376.5 509v1M376.5 511v1M377.5 84v3M377.5 512v3M378.5 80v4M378.5 515v4M379.5 77v3M379.5 519v3M380.5 76v1M380.5 522v1M394.5 94v3M394.5 502v3M395.5 92v2M395.5 505v2M396.5 90v2M396.5 507v2M397.5 88v2M397.5 509v3M398.5 86v2M398.5 468v2M398.5 512v2M399.5 84v2M399.5 470v2M399.5 514v1M399.5 516v1M400.5 81v1M401.5 79v2M401.5 473v2M402.5 77v2M402.5 475v2M403.5 75v2M404.5 72v3M404.5 414v17M404.5 478v2M405.5 70v2M405.5 480v2M406.5 68v2M407.5 66v2M407.5 138v1M407.5 483v2M408.5 64v2M408.5 135v2M408.5 485v2M409.5 61v3M410.5 59v2M410.5 132v2M410.5 488v2M411.5 57v2M411.5 104v1M411.5 490v2M411.5 494v1M412.5 55v2M412.5 102v2M412.5 129v2M412.5 495v2M413.5 52v3M414.5 50v2M414.5 99v2M414.5 126v2M414.5 498v2M415.5 48v2M415.5 97v2M415.5 500v2M416.5 46v2M416.5 123v2M417.5 44v2M417.5 94v2M417.5 503v2M418.5 41v1M418.5 43v1M418.5 93v1M418.5 120v2M418.5 505v1M420.5 117v2M422.5 114v2M428.5 116v1M428.5 482v1M429.5 113v2M429.5 484v2M432.5 109v2M432.5 488v2M435.5 105v2M435.5 492v2M437.5 496v2M439.5 499v2M442.5 503v2M444.5 506v2M445.5 124v2M445.5 473v2M446.5 172v2M446.5 425v2M446.5 509v2M449.5 513v2M450.5 118v2M450.5 479v2M451.5 178v2M451.5 419v2M451.5 516v2M453.5 519v2M454.5 182v2M454.5 415v2M455.5 522v2M457.5 186v2M457.5 411v2M458.5 141v1M458.5 457v1M458.5 526v2M459.5 189v2M459.5 408v2M460.5 529v2M461.5 192v2M461.5 405v2M461.5 532v1M462.5 145v2M462.5 452v2M463.5 195v2M463.5 402v2M465.5 198v2M465.5 399v2M466.5 200v2M466.5 397v2M467.5 202v2M467.5 395v2M469.5 205v2M469.5 392v2M470.5 154v1M470.5 207v2M470.5 390v2M470.5 444v1M471.5 156v1M471.5 209v2M471.5 388v2M471.5 442v1M472.5 211v2M472.5 386v2M473.5 213v2M473.5 384v2M474.5 215v2M474.5 382v2M475.5 137v2M475.5 160v2M475.5 217v2M475.5 380v2M475.5 437v2M475.5 460v2M476.5 219v2M476.5 378v2M477.5 221v3M477.5 375v3M478.5 164v2M478.5 224v2M478.5 373v2M478.5 433v2M479.5 226v3M479.5 370v3M480.5 229v2M480.5 368v2M481.5 168v2M481.5 231v3M481.5 365v3M481.5 429v2M482.5 145v2M482.5 234v3M482.5 362v3M482.5 452v2M483.5 170v3M483.5 237v3M483.5 359v3M483.5 426v3M484.5 240v3M484.5 356v3M485.5 174v2M485.5 243v3M485.5 353v3M485.5 423v2M486.5 246v4M486.5 349v4M487.5 151v2M487.5 177v2M487.5 250v4M487.5 345v4M487.5 420v2M487.5 446v2M488.5 254v4M488.5 341v4M489.5 180v2M489.5 258v5M489.5 336v5M489.5 417v2M490.5 155v2M490.5 263v6M490.5 330v6M490.5 442v2M491.5 183v2M491.5 269v7M491.5 323v7M491.5 414v2M492.5 185v2M492.5 276v11M492.5 312v11M492.5 412v2M493.5 159v2M493.5 188v1M493.5 287v12M493.5 300v12M493.5 410v1M493.5 438v2M494.5 161v1M494.5 437v1M495.5 163v1M495.5 190v2M495.5 408v1M495.5 435v1M496.5 192v2M496.5 405v2M497.5 165v2M497.5 194v2M497.5 403v2M497.5 432v2M498.5 196v2M498.5 401v2M499.5 168v2M499.5 198v2M499.5 399v2M499.5 429v2M500.5 201v1M500.5 397v2M501.5 171v2M501.5 202v2M501.5 395v2M501.5 426v2M502.5 205v1M502.5 393v1M503.5 174v2M503.5 206v2M503.5 391v2M503.5 423v2M504.5 176v2M504.5 208v3M504.5 388v3M504.5 421v2M505.5 211v2M505.5 386v2M506.5 179v1M506.5 213v2M506.5 384v2M506.5 419v1M507.5 181v2M507.5 215v3M507.5 381v3M507.5 416v2M508.5 183v2M508.5 218v3M508.5 378v3M508.5 414v2M509.5 185v2M509.5 221v1M509.5 377v1M509.5 412v2M510.5 222v4M510.5 373v4M511.5 188v2M511.5 226v3M511.5 370v3M511.5 409v2M512.5 190v2M512.5 229v3M512.5 367v3M512.5 407v2M513.5 112v2M513.5 192v2M513.5 232v3M513.5 364v3M513.5 405v2M513.5 485v2M514.5 194v2M514.5 235v4M514.5 360v4M514.5 403v2M515.5 196v4M515.5 239v2M515.5 358v2M515.5 401v2M516.5 200v1M516.5 241v5M516.5 353v5M516.5 398v2M517.5 201v2M517.5 246v5M517.5 348v5M517.5 396v2M518.5 203v2M518.5 251v4M518.5 344v4M518.5 394v2M519.5 119v2M519.5 205v3M519.5 255v6M519.5 338v6M519.5 391v3M519.5 478v2M520.5 208v2M520.5 260v7M520.5 332v7M520.5 389v2M521.5 210v3M521.5 267v8M521.5 324v8M521.5 386v3M522.5 213v2M522.5 275v11M522.5 313v11M522.5 384v2M523.5 124v2M523.5 215v4M523.5 286v13M523.5 300v13M523.5 380v4M523.5 473v2M524.5 219v2M524.5 378v2M525.5 221v3M525.5 375v3M526.5 128v2M526.5 224v3M526.5 372v3M526.5 469v2M527.5 227v3M527.5 369v3M528.5 230v3M528.5 366v3M529.5 132v2M529.5 233v4M529.5 362v4M529.5 465v2M530.5 237v1M530.5 239v2M530.5 358v2M530.5 361v1M531.5 135v3M531.5 241v4M531.5 354v4M531.5 462v2M532.5 245v4M532.5 350v4M533.5 249v5M533.5 345v5M534.5 139v2M534.5 254v5M534.5 340v5M534.5 458v2M535.5 259v7M535.5 333v7M536.5 142v2M536.5 266v8M536.5 325v8M536.5 455v2M537.5 274v5M537.5 280v6M537.5 313v12M538.5 145v2M538.5 286v13M538.5 300v13M538.5 452v2M539.5 147v2M539.5 450v2M541.5 150v2M541.5 447v2M542.5 152v2M542.5 445v2M544.5 155v2M544.5 442v2M545.5 157v2M545.5 440v2M547.5 160v2M547.5 437v2M548.5 162v2M548.5 435v2M549.5 164v2M549.5 433v2M550.5 166v2M550.5 431v2M551.5 168v2M551.5 429v2M552.5 170v2M552.5 427v2M553.5 172v2M553.5 425v2M554.5 174v2M554.5 423v2M555.5 176v2M555.5 421v2M556.5 178v2M556.5 419v2M557.5 180v2M557.5 417v1M558.5 182v2M558.5 415v2M559.5 184v3M559.5 412v3M560.5 187v2M560.5 410v2M561.5 189v2M561.5 408v2M562.5 191v3M562.5 405v3M563.5 194v2M563.5 403v2M564.5 196v3M564.5 400v3M565.5 199v3M565.5 397v3M566.5 202v2M566.5 395v2M567.5 204v3M567.5 392v3M568.5 207v3M568.5 389v3M569.5 210v3M569.5 386v3M570.5 213v4M570.5 382v4M571.5 217v3M571.5 379v3M572.5 220v3M572.5 376v3M573.5 223v4M573.5 372v4M574.5 227v4M574.5 368v4M575.5 231v4M575.5 364v4M576.5 235v5M576.5 359v5M577.5 240v4M577.5 355v4M578.5 244v6M578.5 349v6M579.5 250v6M579.5 343v6M580.5 256v7M580.5 336v7M581.5 263v8M581.5 328v8M582.5 271v13M582.5 315v13M583.5 284v31"/>
<path stroke="#bfbfbf" d="M0 0.5h760M299 292.5h1M2 299.5h13M16 299.5h44M106 299.5h25M144 299.5h5M150 299.5h5M156 299.5h58M215 299.5h81M297 299.5h2M300 299.5h76M377 299.5h2M380 299.5h27M408 299.5h16M425 299.5h1M427 299.5h2M430 299.5h63M539 299.5h44M584 299.5h13M0 599.5h760M0.5 1v598M291.5 578v5M291.5 584v13M292.5 541v37M293.5 504v4M293.5 524v14M293.5 539v2M294.5 467v26M295.5 429v38M296.5 392v15M296.5 408v21M297.5 355v19M297.5 375v12M297.5 388v4M298.5 318v37M299.5 281v10M299.5 294v5M299.5 300v18M300.5 244v37M301.5 207v37M302.5 170v37M303.5 144v5M303.5 150v5M303.5 156v14M304.5 106v26M305.5 58v2M305.5 61v14M305.5 90v5M306.5 21v37M307.5 2v13M307.5 16v5M599.5 1v598M759.5 1v598"/>
<path stroke="#7f7f7f" d="M226 73.5h1M372 73.5h1M214 77.5h1M384 77.5h1M202 82.5h1M396 82.5h1M195 85.5h1M403 85.5h1M191 87.5h1M407 87.5h1M187 89.5h1M411 89.5h1M215 90.5h1M383 90.5h1M414 91.5h1M208 93.5h1M390 93.5h1M190 94.5h1M408 94.5h1M176 95.5h1M422 95.5h1M173 97.5h1M425 97.5h1M178 98.5h1M420 98.5h1M175 100.5h1M423 100.5h1M171 102.5h1M408 102.5h1M427 102.5h1M181 103.5h1M417 103.5h1M168 104.5h1M173 105.5h1M178 105.5h1M420 105.5h1M425 105.5h1M159 106.5h1M183 106.5h1M415 106.5h1M429 106.5h1M439 106.5h1M170 107.5h1M175 108.5h1M180 108.5h1M418 108.5h1M423 108.5h1M156 109.5h1M161 109.5h1M437 109.5h1M442 109.5h1M162 110.5h1M172 110.5h1M436 110.5h1M153 112.5h1M158 112.5h1M440 112.5h1M445 112.5h1M159 113.5h1M164 113.5h1M425 113.5h1M434 113.5h1M439 113.5h1M149 114.5h1M165 114.5h1M433 114.5h1M449 114.5h1M150 115.5h1M155 115.5h1M443 115.5h1M448 115.5h1M151 116.5h1M156 116.5h1M161 116.5h1M437 116.5h1M442 116.5h1M447 116.5h1M152 117.5h1M157 117.5h1M162 117.5h1M167 117.5h1M431 117.5h1M436 117.5h1M441 117.5h1M446 117.5h1M153 118.5h1M158 118.5h1M440 118.5h1M445 118.5h1M143 119.5h1M455 119.5h1M144 120.5h1M454 120.5h1M145 121.5h1M155 121.5h1M160 121.5h1M438 121.5h1M443 121.5h1M453 121.5h1M140 122.5h1M146 122.5h1M156 122.5h1M161 122.5h1M437 122.5h1M442 122.5h1M452 122.5h1M458 122.5h1M141 123.5h1M147 123.5h1M157 123.5h1M441 123.5h1M451 123.5h1M457 123.5h1M142 124.5h1M158 124.5h1M440 124.5h1M456 124.5h1M137 125.5h1M143 125.5h1M455 125.5h1M461 125.5h1M138 126.5h1M144 126.5h1M149 126.5h1M449 126.5h1M454 126.5h1M460 126.5h1M139 127.5h1M150 127.5h1M448 127.5h1M459 127.5h1M134 128.5h1M140 128.5h1M151 128.5h1M447 128.5h1M458 128.5h1M465 128.5h1M135 129.5h1M141 129.5h1M146 129.5h1M152 129.5h1M446 129.5h1M452 129.5h1M457 129.5h1M464 129.5h1M136 130.5h1M147 130.5h1M451 130.5h1M463 130.5h1M137 131.5h1M148 131.5h1M450 131.5h1M462 131.5h1M138 132.5h1M143 132.5h1M149 132.5h1M449 132.5h1M455 132.5h1M460 132.5h2M128 133.5h1M139 133.5h1M144 133.5h1M203 133.5h1M454 133.5h1M459 133.5h1M129 134.5h1M140 134.5h1M145 134.5h1M453 134.5h1M458 134.5h1M470 134.5h1M130 135.5h1M141 135.5h1M146 135.5h1M204 135.5h1M452 135.5h1M457 135.5h1M469 135.5h1M131 136.5h1M142 136.5h1M456 136.5h1M468 136.5h1M125 137.5h1M132 137.5h1M143 137.5h1M205 137.5h1M455 137.5h1M467 137.5h1M473 137.5h1M126 138.5h1M466 138.5h1M472 138.5h1M127 139.5h1M206 139.5h1M405 139.5h1M465 139.5h1M471 139.5h1M122 140.5h1M128 140.5h1M134 140.5h1M464 140.5h1M470 140.5h1M476 140.5h1M123 141.5h1M129 141.5h1M135 141.5h1M207 141.5h1M404 141.5h1M463 141.5h1M468 141.5h2M475 141.5h1M124 142.5h1M130 142.5h2M136 142.5h1M462 142.5h1M467 142.5h1M474 142.5h1M119 143.5h1M125 143.5h1M132 143.5h1M137 143.5h1M208 143.5h1M403 143.5h1M461 143.5h1M466 143.5h1M473 143.5h1M479 143.5h1M120 144.5h1M126 144.5h1M133 144.5h1M465 144.5h1M471 144.5h2M478 144.5h1M121 145.5h1M127 145.5h2M134 145.5h1M210 145.5h1M401 145.5h1M464 145.5h1M470 145.5h1M477 145.5h1M122 146.5h1M129 146.5h1M135 146.5h1M463 146.5h1M469 146.5h1M476 146.5h1M123 147.5h1M130 147.5h1M211 147.5h1M400 147.5h1M468 147.5h1M474 147.5h2M124 148.5h2M131 148.5h1M467 148.5h1M473 148.5h1M114 149.5h1M126 149.5h1M132 149.5h1M212 149.5h1M399 149.5h1M466 149.5h1M472 149.5h1M484 149.5h1M115 150.5h1M127 150.5h1M471 150.5h1M483 150.5h1M116 151.5h1M128 151.5h1M213 151.5h1M397 151.5h1M470 151.5h1M482 151.5h1M117 152.5h1M129 152.5h1M469 152.5h1M481 152.5h1M112 153.5h1M118 153.5h1M214 153.5h1M396 153.5h1M479 153.5h2M486 153.5h1M113 154.5h2M119 154.5h2M478 154.5h1M484 154.5h2M115 155.5h1M121 155.5h1M215 155.5h1M395 155.5h1M477 155.5h1M483 155.5h1M109 156.5h1M116 156.5h1M122 156.5h1M476 156.5h1M482 156.5h1M489 156.5h1M110 157.5h2M117 157.5h1M123 157.5h1M217 157.5h1M393 157.5h1M475 157.5h1M481 157.5h1M487 157.5h2M112 158.5h1M118 158.5h1M124 158.5h1M474 158.5h1M480 158.5h1M486 158.5h1M106 159.5h1M113 159.5h1M119 159.5h2M218 159.5h1M392 159.5h1M478 159.5h2M485 159.5h1M492 159.5h1M107 160.5h2M114 160.5h2M121 160.5h1M477 160.5h1M483 160.5h2M490 160.5h2M109 161.5h1M116 161.5h1M122 161.5h1M219 161.5h1M391 161.5h1M476 161.5h1M482 161.5h1M489 161.5h1M110 162.5h1M117 162.5h1M481 162.5h1M488 162.5h1M111 163.5h2M118 163.5h2M220 163.5h1M389 163.5h1M479 163.5h2M486 163.5h2M113 164.5h1M485 164.5h1M114 165.5h1M221 165.5h1M388 165.5h1M484 165.5h1M115 166.5h2M482 166.5h2M102 167.5h2M117 167.5h1M222 167.5h1M387 167.5h1M481 167.5h1M495 167.5h2M104 168.5h2M494 168.5h1M106 169.5h1M223 169.5h1M385 169.5h1M492 169.5h2M100 170.5h2M107 170.5h2M491 170.5h1M497 170.5h2M102 171.5h1M109 171.5h2M225 171.5h1M384 171.5h1M489 171.5h2M496 171.5h1M103 172.5h2M111 172.5h2M488 172.5h1M494 172.5h2M97 173.5h1M105 173.5h1M113 173.5h1M226 173.5h1M383 173.5h1M486 173.5h2M493 173.5h1M501 173.5h1M98 174.5h2M106 174.5h2M491 174.5h2M499 174.5h2M100 175.5h1M108 175.5h1M227 175.5h1M381 175.5h1M490 175.5h1M498 175.5h1M95 176.5h1M101 176.5h2M109 176.5h2M488 176.5h2M496 176.5h2M503 176.5h1M96 177.5h2M103 177.5h2M228 177.5h1M380 177.5h1M494 177.5h2M501 177.5h2M98 178.5h1M105 178.5h1M493 178.5h1M500 178.5h1M99 179.5h2M106 179.5h2M229 179.5h1M379 179.5h1M491 179.5h2M498 179.5h2M101 180.5h2M108 180.5h1M490 180.5h1M496 180.5h2M103 181.5h1M230 181.5h1M377 181.5h1M495 181.5h1M104 182.5h2M493 182.5h2M106 183.5h1M232 183.5h1M376 183.5h1M492 183.5h1M91 184.5h1M507 184.5h1M92 185.5h2M233 185.5h1M375 185.5h1M505 185.5h2M94 186.5h2M503 186.5h2M89 187.5h1M96 187.5h2M234 187.5h1M373 187.5h1M501 187.5h2M509 187.5h1M90 188.5h2M98 188.5h2M499 188.5h2M507 188.5h2M92 189.5h2M100 189.5h2M235 189.5h1M497 189.5h2M505 189.5h2M94 190.5h1M102 190.5h1M496 190.5h1M503 190.5h2M87 191.5h1M95 191.5h2M236 191.5h1M371 191.5h1M502 191.5h1M510 191.5h2M88 192.5h2M97 192.5h2M500 192.5h2M508 192.5h2M90 193.5h2M99 193.5h2M237 193.5h1M369 193.5h1M498 193.5h2M506 193.5h2M92 194.5h2M504 194.5h2M85 195.5h1M94 195.5h2M239 195.5h1M368 195.5h1M502 195.5h2M512 195.5h2M86 196.5h2M96 196.5h2M500 196.5h2M510 196.5h2M88 197.5h2M98 197.5h2M240 197.5h1M367 197.5h1M499 197.5h1M508 197.5h2M90 198.5h2M506 198.5h2M92 199.5h2M241 199.5h1M365 199.5h1M504 199.5h2M94 200.5h2M502 200.5h2M96 201.5h2M242 201.5h1M364 201.5h1M501 201.5h1M82 202.5h1M516 202.5h1M83 203.5h2M243 203.5h1M363 203.5h1M514 203.5h2M85 204.5h2M512 204.5h2M87 205.5h2M244 205.5h1M361 205.5h1M510 205.5h2M80 206.5h2M89 206.5h2M131 206.5h1M508 206.5h2M517 206.5h2M82 207.5h2M91 207.5h2M133 207.5h1M246 207.5h1M360 207.5h1M506 207.5h2M515 207.5h2M84 208.5h2M93 208.5h1M135 208.5h1M505 208.5h1M512 208.5h3M86 209.5h3M137 209.5h1M359 209.5h1M510 209.5h2M78 210.5h2M89 210.5h2M139 210.5h1M508 210.5h2M519 210.5h2M80 211.5h2M91 211.5h2M141 211.5h1M248 211.5h1M357 211.5h1M506 211.5h2M517 211.5h2M82 212.5h3M143 212.5h1M514 212.5h3M85 213.5h3M145 213.5h1M249 213.5h1M356 213.5h1M471 213.5h1M511 213.5h3M77 214.5h1M88 214.5h2M147 214.5h1M469 214.5h1M509 214.5h2M521 214.5h1M78 215.5h2M90 215.5h1M250 215.5h1M355 215.5h1M467 215.5h1M508 215.5h1M519 215.5h2M80 216.5h3M149 216.5h1M465 216.5h1M516 216.5h3M83 217.5h3M151 217.5h1M251 217.5h1M353 217.5h1M463 217.5h1M513 217.5h3M86 218.5h2M153 218.5h1M461 218.5h1M511 218.5h2M88 219.5h2M155 219.5h1M253 219.5h1M352 219.5h1M459 219.5h1M509 219.5h2M157 220.5h1M457 220.5h1M159 221.5h1M254 221.5h1M351 221.5h1M455 221.5h1M74 222.5h2M161 222.5h1M453 222.5h1M523 222.5h2M76 223.5h3M163 223.5h1M255 223.5h1M350 223.5h1M451 223.5h1M520 223.5h3M79 224.5h3M165 224.5h1M449 224.5h1M517 224.5h3M82 225.5h3M256 225.5h1M348 225.5h1M447 225.5h1M514 225.5h3M73 226.5h1M85 226.5h2M167 226.5h1M445 226.5h1M512 226.5h2M525 226.5h1M74 227.5h3M169 227.5h1M257 227.5h1M347 227.5h1M443 227.5h1M522 227.5h3M77 228.5h4M171 228.5h1M441 228.5h1M518 228.5h4M81 229.5h3M173 229.5h1M258 229.5h1M346 229.5h1M439 229.5h1M515 229.5h3M71 230.5h2M84 230.5h2M175 230.5h1M437 230.5h1M513 230.5h2M526 230.5h2M73 231.5h3M177 231.5h1M260 231.5h1M344 231.5h1M435 231.5h1M523 231.5h3M76 232.5h4M179 232.5h1M433 232.5h1M519 232.5h4M80 233.5h3M181 233.5h1M261 233.5h1M343 233.5h1M431 233.5h1M516 233.5h3M70 234.5h3M83 234.5h2M183 234.5h1M429 234.5h1M514 234.5h2M526 234.5h3M73 235.5h4M262 235.5h1M342 235.5h1M427 235.5h1M522 235.5h4M77 236.5h4M185 236.5h1M425 236.5h1M518 236.5h4M81 237.5h3M187 237.5h1M263 237.5h1M340 237.5h1M423 237.5h1M515 237.5h3M189 238.5h1M421 238.5h1M191 239.5h1M264 239.5h1M339 239.5h1M419 239.5h1M193 240.5h1M417 240.5h1M195 241.5h1M265 241.5h1M338 241.5h1M415 241.5h1M68 242.5h3M197 242.5h1M413 242.5h1M528 242.5h3M71 243.5h4M199 243.5h1M266 243.5h1M336 243.5h1M411 243.5h1M524 243.5h4M75 244.5h4M201 244.5h1M409 244.5h1M520 244.5h4M79 245.5h3M268 245.5h1M335 245.5h1M407 245.5h1M517 245.5h3M67 246.5h3M203 246.5h1M405 246.5h1M529 246.5h3M70 247.5h4M205 247.5h1M269 247.5h1M334 247.5h1M403 247.5h1M525 247.5h4M74 248.5h4M401 248.5h1M521 248.5h4M78 249.5h3M209 249.5h1M270 249.5h1M332 249.5h1M399 249.5h1M518 249.5h3M66 250.5h3M211 250.5h1M397 250.5h1M530 250.5h3M69 251.5h4M213 251.5h1M271 251.5h1M331 251.5h1M395 251.5h1M526 251.5h4M73 252.5h4M215 252.5h1M393 252.5h1M522 252.5h4M77 253.5h3M217 253.5h1M272 253.5h1M330 253.5h1M391 253.5h1M519 253.5h3M65 254.5h4M389 254.5h1M531 254.5h3M69 255.5h6M219 255.5h1M273 255.5h1M328 255.5h1M387 255.5h1M527 255.5h4M75 256.5h4M221 256.5h1M385 256.5h1M523 256.5h4M223 257.5h1M275 257.5h1M327 257.5h1M383 257.5h1M520 257.5h3M225 258.5h1M381 258.5h1M227 259.5h1M276 259.5h1M326 259.5h1M379 259.5h1M229 260.5h1M377 260.5h1M231 261.5h1M277 261.5h1M324 261.5h1M375 261.5h1M64 262.5h3M233 262.5h1M373 262.5h1M532 262.5h3M67 263.5h7M235 263.5h1M278 263.5h1M323 263.5h1M371 263.5h1M525 263.5h7M74 264.5h4M369 264.5h1M521 264.5h4M237 265.5h1M279 265.5h1M322 265.5h1M367 265.5h1M63 266.5h4M239 266.5h1M365 266.5h1M532 266.5h4M67 267.5h6M241 267.5h1M280 267.5h1M320 267.5h1M363 267.5h1M526 267.5h6M73 268.5h4M243 268.5h1M361 268.5h1M522 268.5h4M245 269.5h1M282 269.5h1M319 269.5h1M359 269.5h1M63 270.5h3M247 270.5h1M357 270.5h1M533 270.5h3M66 271.5h7M249 271.5h1M283 271.5h1M318 271.5h1M355 271.5h1M526 271.5h7M73 272.5h4M251 272.5h1M353 272.5h1M522 272.5h4M253 273.5h1M284 273.5h1M316 273.5h1M351 273.5h1M349 274.5h1M62 275.5h7M255 275.5h1M285 275.5h1M315 275.5h1M347 275.5h1M530 275.5h7M69 276.5h7M257 276.5h1M345 276.5h1M523 276.5h7M259 277.5h1M286 277.5h1M314 277.5h1M343 277.5h1M261 278.5h1M341 278.5h1M263 279.5h1M287 279.5h1M312 279.5h1M339 279.5h1M265 280.5h1M337 280.5h1M267 281.5h1M289 281.5h1M311 281.5h1M335 281.5h1M269 282.5h1M333 282.5h1M62 283.5h6M271 283.5h1M290 283.5h1M310 283.5h1M331 283.5h1M530 283.5h7M68 284.5h8M329 284.5h1M523 284.5h7M273 285.5h1M291 285.5h1M308 285.5h1M327 285.5h1M275 286.5h1M325 286.5h1M61 287.5h7M277 287.5h1M292 287.5h1M307 287.5h1M323 287.5h1M530 287.5h8M68 288.5h7M279 288.5h1M321 288.5h1M524 288.5h6M281 289.5h1M293 289.5h1M306 289.5h1M319 289.5h1M283 290.5h1M317 290.5h1M61 291.5h7M285 291.5h1M294 291.5h1M304 291.5h1M315 291.5h1M531 291.5h7M68 292.5h7M287 292.5h1M313 292.5h1M524 292.5h7M289 293.5h1M296 293.5h1M303 293.5h1M311 293.5h1M309 294.5h1M61 295.5h7M291 295.5h1M297 295.5h1M302 295.5h1M307 295.5h1M531 295.5h7M68 296.5h7M293 296.5h1M305 296.5h1M524 296.5h7M295 297.5h1M298 297.5h1M300 297.5h1M303 297.5h1M297 298.5h1M301 298.5h1M299 299.5h1M297 300.5h1M301 300.5h1M298 301.5h1M300 301.5h1M303 301.5h1M68 302.5h7M293 302.5h1M305 302.5h1M524 302.5h7M61 303.5h7M291 303.5h1M296 303.5h1M301 303.5h1M307 303.5h1M531 303.5h7M289 304.5h1M287 305.5h1M295 305.5h1M302 305.5h1M309 305.5h1M68 306.5h7M285 306.5h1M311 306.5h1M524 306.5h7M61 307.5h7M283 307.5h1M294 307.5h1M304 307.5h1M313 307.5h1M531 307.5h7M281 308.5h1M315 308.5h1M279 309.5h1M292 309.5h1M305 309.5h1M317 309.5h1M68 310.5h7M277 310.5h1M319 310.5h1M524 310.5h6M61 311.5h7M275 311.5h1M291 311.5h1M306 311.5h1M321 311.5h1M530 311.5h8M273 312.5h1M323 312.5h1M271 313.5h1M290 313.5h1M307 313.5h1M325 313.5h1M68 314.5h8M269 314.5h1M523 314.5h7M62 315.5h6M267 315.5h1M288 315.5h1M308 315.5h1M327 315.5h1M530 315.5h7M265 316.5h1M329 316.5h1M263 317.5h1M287 317.5h1M309 317.5h1M331 317.5h1M261 318.5h1M333 318.5h1M259 319.5h1M286 319.5h1M311 319.5h1M335 319.5h1M257 320.5h1M337 320.5h1M255 321.5h1M284 321.5h1M312 321.5h1M339 321.5h1M69 322.5h7M253 322.5h1M341 322.5h1M523 322.5h7M62 323.5h7M251 323.5h1M283 323.5h1M313 323.5h1M343 323.5h1M530 323.5h7M249 324.5h1M247 325.5h1M282 325.5h1M314 325.5h1M345 325.5h1M73 326.5h4M245 326.5h1M347 326.5h1M522 326.5h4M66 327.5h7M243 327.5h1M280 327.5h1M315 327.5h1M349 327.5h1M526 327.5h7M63 328.5h3M241 328.5h1M351 328.5h1M533 328.5h3M239 329.5h1M279 329.5h1M316 329.5h1M353 329.5h1M73 330.5h4M237 330.5h1M355 330.5h1M522 330.5h4M67 331.5h6M235 331.5h1M278 331.5h1M318 331.5h1M357 331.5h1M526 331.5h6M63 332.5h4M233 332.5h1M359 332.5h1M532 332.5h4M231 333.5h1M276 333.5h1M319 333.5h1M361 333.5h1M74 334.5h4M229 334.5h1M521 334.5h4M67 335.5h7M227 335.5h1M275 335.5h1M320 335.5h1M363 335.5h1M525 335.5h7M64 336.5h3M225 336.5h1M365 336.5h1M532 336.5h3M223 337.5h1M274 337.5h1M321 337.5h1M367 337.5h1M221 338.5h1M219 339.5h1M272 339.5h1M322 339.5h1M371 339.5h1M217 340.5h1M373 340.5h1M76 341.5h3M215 341.5h1M271 341.5h1M323 341.5h1M375 341.5h1M72 342.5h4M213 342.5h1M377 342.5h1M520 342.5h4M68 343.5h4M211 343.5h1M270 343.5h1M325 343.5h1M379 343.5h1M524 343.5h6M65 344.5h3M209 344.5h1M530 344.5h4M77 345.5h3M207 345.5h1M268 345.5h1M326 345.5h1M381 345.5h1M519 345.5h3M73 346.5h4M205 346.5h1M383 346.5h1M522 346.5h4M69 347.5h4M203 347.5h1M267 347.5h1M327 347.5h1M385 347.5h1M526 347.5h4M66 348.5h3M201 348.5h1M387 348.5h1M530 348.5h3M78 349.5h3M199 349.5h1M266 349.5h1M328 349.5h1M389 349.5h1M518 349.5h3M74 350.5h4M197 350.5h1M391 350.5h1M521 350.5h4M70 351.5h4M195 351.5h1M264 351.5h1M329 351.5h1M393 351.5h1M525 351.5h4M67 352.5h3M193 352.5h1M395 352.5h1M529 352.5h3M79 353.5h3M191 353.5h1M263 353.5h1M330 353.5h1M517 353.5h3M75 354.5h4M189 354.5h1M397 354.5h1M520 354.5h4M71 355.5h4M187 355.5h1M262 355.5h1M332 355.5h1M399 355.5h1M524 355.5h4M68 356.5h3M185 356.5h1M401 356.5h1M528 356.5h3M183 357.5h1M260 357.5h1M333 357.5h1M403 357.5h1M181 358.5h1M405 358.5h1M179 359.5h1M259 359.5h1M334 359.5h1M407 359.5h1M177 360.5h1M409 360.5h1M81 361.5h3M258 361.5h1M411 361.5h1M515 361.5h3M77 362.5h4M173 362.5h1M413 362.5h1M518 362.5h4M73 363.5h4M171 363.5h1M256 363.5h1M336 363.5h1M522 363.5h4M70 364.5h3M83 364.5h2M169 364.5h1M415 364.5h1M514 364.5h2M526 364.5h3M80 365.5h3M167 365.5h1M255 365.5h1M337 365.5h1M417 365.5h1M516 365.5h3M76 366.5h4M165 366.5h1M419 366.5h1M519 366.5h4M73 367.5h3M163 367.5h1M254 367.5h1M338 367.5h1M421 367.5h1M523 367.5h3M71 368.5h2M84 368.5h2M161 368.5h1M423 368.5h1M513 368.5h2M526 368.5h2M81 369.5h3M159 369.5h1M252 369.5h1M340 369.5h1M425 369.5h1M515 369.5h3M77 370.5h4M157 370.5h1M427 370.5h1M518 370.5h4M74 371.5h3M155 371.5h1M341 371.5h1M429 371.5h1M522 371.5h3M73 372.5h1M85 372.5h2M153 372.5h1M431 372.5h1M512 372.5h2M525 372.5h1M82 373.5h3M151 373.5h1M250 373.5h1M342 373.5h1M514 373.5h3M79 374.5h3M149 374.5h1M433 374.5h1M517 374.5h3M76 375.5h3M248 375.5h1M343 375.5h1M435 375.5h1M520 375.5h3M74 376.5h2M145 376.5h1M437 376.5h1M523 376.5h2M143 377.5h1M247 377.5h1M344 377.5h1M439 377.5h1M141 378.5h1M441 378.5h1M88 379.5h2M139 379.5h1M246 379.5h1M345 379.5h1M443 379.5h1M509 379.5h2M86 380.5h2M137 380.5h1M445 380.5h1M511 380.5h2M83 381.5h3M245 381.5h1M347 381.5h1M447 381.5h1M513 381.5h3M80 382.5h3M133 382.5h1M449 382.5h1M516 382.5h3M78 383.5h2M90 383.5h1M131 383.5h1M243 383.5h1M348 383.5h1M508 383.5h1M519 383.5h2M77 384.5h1M88 384.5h2M129 384.5h1M451 384.5h1M509 384.5h2M521 384.5h1M85 385.5h3M127 385.5h1M242 385.5h1M349 385.5h1M453 385.5h1M511 385.5h3M82 386.5h3M455 386.5h1M514 386.5h3M80 387.5h2M91 387.5h2M241 387.5h1M457 387.5h1M506 387.5h2M517 387.5h2M78 388.5h2M89 388.5h2M459 388.5h1M508 388.5h2M519 388.5h2M86 389.5h3M239 389.5h1M351 389.5h1M461 389.5h1M510 389.5h2M84 390.5h2M93 390.5h1M463 390.5h1M505 390.5h1M512 390.5h3M82 391.5h2M91 391.5h2M238 391.5h1M352 391.5h1M465 391.5h1M506 391.5h2M515 391.5h2M80 392.5h2M89 392.5h2M467 392.5h1M508 392.5h2M517 392.5h2M87 393.5h2M237 393.5h1M354 393.5h1M510 393.5h2M85 394.5h2M512 394.5h2M83 395.5h2M235 395.5h1M355 395.5h1M514 395.5h2M82 396.5h1M516 396.5h1M96 397.5h2M234 397.5h1M356 397.5h1M501 397.5h1M94 398.5h2M502 398.5h2M92 399.5h2M233 399.5h1M357 399.5h1M504 399.5h2M90 400.5h2M506 400.5h2M88 401.5h2M98 401.5h2M231 401.5h1M358 401.5h1M499 401.5h1M508 401.5h2M86 402.5h2M96 402.5h2M500 402.5h2M510 402.5h2M85 403.5h1M94 403.5h2M230 403.5h1M359 403.5h1M502 403.5h2M512 403.5h2M92 404.5h2M504 404.5h2M90 405.5h2M99 405.5h2M229 405.5h1M361 405.5h1M498 405.5h2M506 405.5h2M88 406.5h2M97 406.5h2M500 406.5h2M508 406.5h2M87 407.5h1M95 407.5h2M227 407.5h1M362 407.5h1M502 407.5h1M510 407.5h2M94 408.5h1M101 408.5h2M496 408.5h1M503 408.5h2M92 409.5h2M99 409.5h2M226 409.5h1M363 409.5h1M497 409.5h2M505 409.5h2M90 410.5h2M97 410.5h2M499 410.5h2M507 410.5h2M89 411.5h1M95 411.5h2M225 411.5h1M364 411.5h1M501 411.5h2M509 411.5h1M93 412.5h2M503 412.5h2M91 413.5h2M223 413.5h1M365 413.5h1M505 413.5h2M507 414.5h1M106 415.5h1M222 415.5h1M366 415.5h1M492 415.5h1M104 416.5h2M493 416.5h2M103 417.5h1M221 417.5h1M368 417.5h1M495 417.5h1M101 418.5h2M108 418.5h1M490 418.5h1M496 418.5h2M99 419.5h2M106 419.5h2M219 419.5h1M369 419.5h1M491 419.5h2M498 419.5h2M98 420.5h1M105 420.5h1M493 420.5h1M500 420.5h1M96 421.5h2M103 421.5h2M218 421.5h1M370 421.5h1M494 421.5h2M501 421.5h2M95 422.5h1M101 422.5h2M109 422.5h2M488 422.5h2M496 422.5h2M503 422.5h1M100 423.5h1M108 423.5h1M217 423.5h1M371 423.5h1M490 423.5h1M498 423.5h1M98 424.5h2M106 424.5h2M491 424.5h2M499 424.5h2M97 425.5h1M105 425.5h1M111 425.5h2M215 425.5h1M372 425.5h1M485 425.5h1M493 425.5h1M501 425.5h1M103 426.5h2M110 426.5h1M486 426.5h2M494 426.5h2M102 427.5h1M108 427.5h2M214 427.5h1M373 427.5h1M488 427.5h2M496 427.5h1M100 428.5h2M107 428.5h1M490 428.5h1M497 428.5h2M105 429.5h2M213 429.5h1M375 429.5h1M491 429.5h2M104 430.5h1M493 430.5h2M102 431.5h2M117 431.5h1M211 431.5h1M376 431.5h1M481 431.5h1M495 431.5h2M115 432.5h2M482 432.5h2M114 433.5h1M210 433.5h1M377 433.5h1M484 433.5h1M113 434.5h1M485 434.5h1M111 435.5h2M118 435.5h2M209 435.5h1M378 435.5h1M479 435.5h2M486 435.5h2M110 436.5h1M117 436.5h1M481 436.5h1M488 436.5h1M109 437.5h1M116 437.5h1M122 437.5h1M207 437.5h1M379 437.5h1M476 437.5h1M482 437.5h1M489 437.5h1M107 438.5h2M114 438.5h2M121 438.5h1M477 438.5h1M483 438.5h2M490 438.5h2M106 439.5h1M113 439.5h1M119 439.5h2M206 439.5h1M380 439.5h1M478 439.5h2M485 439.5h1M492 439.5h1M112 440.5h1M118 440.5h1M124 440.5h1M474 440.5h1M480 440.5h1M486 440.5h1M110 441.5h2M117 441.5h1M123 441.5h1M205 441.5h1M381 441.5h1M475 441.5h1M481 441.5h1M487 441.5h2M109 442.5h1M116 442.5h1M122 442.5h1M476 442.5h1M482 442.5h1M489 442.5h1M115 443.5h1M121 443.5h1M203 443.5h1M383 443.5h1M477 443.5h1M483 443.5h1M113 444.5h2M119 444.5h2M478 444.5h1M484 444.5h2M112 445.5h1M118 445.5h1M202 445.5h1M384 445.5h1M479 445.5h2M486 445.5h1M117 446.5h1M129 446.5h1M469 446.5h1M481 446.5h1M116 447.5h1M128 447.5h1M201 447.5h1M385 447.5h1M470 447.5h1M482 447.5h1M115 448.5h1M127 448.5h1M471 448.5h1M483 448.5h1M114 449.5h1M126 449.5h1M132 449.5h1M199 449.5h1M386 449.5h1M466 449.5h1M472 449.5h1M484 449.5h1M124 450.5h2M131 450.5h1M467 450.5h1M473 450.5h1M123 451.5h1M130 451.5h1M198 451.5h1M387 451.5h1M468 451.5h1M474 451.5h2M122 452.5h1M129 452.5h1M135 452.5h1M463 452.5h1M469 452.5h1M476 452.5h1M121 453.5h1M127 453.5h2M134 453.5h1M197 453.5h1M388 453.5h1M464 453.5h1M470 453.5h1M477 453.5h1M120 454.5h1M126 454.5h1M133 454.5h1M465 454.5h1M471 454.5h2M478 454.5h1M119 455.5h1M125 455.5h1M132 455.5h1M137 455.5h1M195 455.5h1M390 455.5h1M461 455.5h1M466 455.5h1M473 455.5h1M479 455.5h1M124 456.5h1M130 456.5h2M136 456.5h1M462 456.5h1M467 456.5h1M474 456.5h1M123 457.5h1M129 457.5h1M135 457.5h1M194 457.5h1M391 457.5h1M463 457.5h1M468 457.5h2M475 457.5h1M122 458.5h1M128 458.5h1M134 458.5h1M464 458.5h1M470 458.5h1M476 458.5h1M127 459.5h1M133 459.5h1M193 459.5h1M392 459.5h1M465 459.5h1M471 459.5h1M126 460.5h1M132 460.5h1M472 460.5h1M125 461.5h1M131 461.5h1M143 461.5h1M393 461.5h1M455 461.5h1M473 461.5h1M130 462.5h1M142 462.5h1M456 462.5h1M467 462.5h1M129 463.5h1M141 463.5h1M146 463.5h1M394 463.5h1M452 463.5h1M457 463.5h1M468 463.5h1M128 464.5h1M140 464.5h1M145 464.5h1M453 464.5h1M458 464.5h1M469 464.5h1M138 465.5h2M144 465.5h1M395 465.5h1M454 465.5h1M459 465.5h1M470 465.5h1M137 466.5h1M143 466.5h1M149 466.5h1M449 466.5h1M455 466.5h1M460 466.5h1M136 467.5h1M142 467.5h1M148 467.5h1M450 467.5h1M456 467.5h1M461 467.5h1M135 468.5h1M147 468.5h1M451 468.5h1M462 468.5h1M134 469.5h1M146 469.5h1M152 469.5h1M446 469.5h1M452 469.5h1M463 469.5h1M133 470.5h1M140 470.5h1M145 470.5h1M151 470.5h1M447 470.5h1M453 470.5h1M458 470.5h1M464 470.5h1M139 471.5h1M150 471.5h1M448 471.5h1M459 471.5h1M138 472.5h1M149 472.5h1M449 472.5h1M460 472.5h1M137 473.5h1M143 473.5h1M148 473.5h1M450 473.5h1M455 473.5h1M461 473.5h1M142 474.5h1M158 474.5h1M440 474.5h1M456 474.5h1M141 475.5h1M157 475.5h1M441 475.5h1M457 475.5h1M140 476.5h1M146 476.5h1M156 476.5h1M161 476.5h1M437 476.5h1M442 476.5h1M452 476.5h1M458 476.5h1M145 477.5h1M155 477.5h1M160 477.5h1M438 477.5h1M443 477.5h1M453 477.5h1M144 478.5h1M154 478.5h1M444 478.5h1M454 478.5h1M143 479.5h1M455 479.5h1M158 480.5h1M440 480.5h1M152 481.5h1M157 481.5h1M162 481.5h1M167 481.5h1M431 481.5h1M436 481.5h1M441 481.5h1M446 481.5h1M151 482.5h1M156 482.5h1M161 482.5h1M437 482.5h1M442 482.5h1M447 482.5h1M150 483.5h1M155 483.5h1M443 483.5h1M448 483.5h1M149 484.5h1M165 484.5h1M433 484.5h1M449 484.5h1M159 485.5h1M164 485.5h1M173 485.5h1M434 485.5h1M439 485.5h1M153 486.5h1M158 486.5h1M440 486.5h1M445 486.5h1M162 488.5h1M426 488.5h1M436 488.5h1M156 489.5h1M161 489.5h1M437 489.5h1M442 489.5h1M170 490.5h1M175 490.5h1M180 490.5h1M418 490.5h1M423 490.5h1M428 491.5h1M159 492.5h1M183 492.5h1M415 492.5h1M439 492.5h1M173 493.5h1M178 493.5h1M420 493.5h1M425 493.5h1M430 494.5h1M181 495.5h1M417 495.5h1M171 496.5h1M190 496.5h1M408 496.5h1M427 496.5h1M175 498.5h1M423 498.5h1M197 499.5h1M401 499.5h1M178 500.5h1M420 500.5h1M173 501.5h1M201 501.5h1M397 501.5h1M425 501.5h1M191 502.5h1M407 502.5h1M176 503.5h1M422 503.5h1M208 505.5h1M390 505.5h1M184 507.5h1M414 507.5h1M215 508.5h1M383 508.5h1M187 509.5h1M411 509.5h1M202 516.5h1M396 516.5h1M214 521.5h1M384 521.5h1M226 525.5h1M372 525.5h1M133.5 138v2M141.5 468v2M142.5 130v2M144.5 471v2M145.5 127v2M147.5 474v2M148.5 124v2M153.5 479v2M154.5 113v2M154.5 119v2M154.5 484v2M157.5 110v2M157.5 487v2M159.5 119v2M159.5 478v2M160.5 107v2M160.5 114v2M160.5 483v2M160.5 490v2M163.5 111v2M163.5 118v2M163.5 479v2M163.5 486v2M166.5 115v2M166.5 482v2M167.5 102v2M167.5 495v2M168.5 493v2M169.5 105v2M169.5 491v2M170.5 100v2M170.5 497v2M171.5 108v2M171.5 488v2M172.5 103v2M172.5 486v2M172.5 494v2M173.5 111v2M174.5 98v2M174.5 106v2M174.5 491v2M174.5 499v2M176.5 101v2M176.5 109v2M176.5 488v2M176.5 496v2M177.5 96v2M177.5 103v2M177.5 494v2M177.5 501v2M179.5 99v2M179.5 106v2M179.5 491v2M179.5 498v2M180.5 101v2M180.5 496v2M182.5 104v2M182.5 493v2M185.5 91v2M185.5 505v2M186.5 93v2M186.5 503v2M187.5 95v2M187.5 501v2M188.5 90v2M188.5 97v2M188.5 499v2M188.5 507v2M189.5 92v2M189.5 99v2M189.5 497v2M189.5 505v2M190.5 101v2M190.5 503v2M191.5 95v2M191.5 510v2M192.5 88v2M192.5 97v2M192.5 500v2M192.5 508v2M193.5 90v2M193.5 99v2M193.5 498v2M193.5 506v2M194.5 92v2M194.5 504v2M195.5 94v2M195.5 502v2M195.5 512v2M196.5 86v2M196.5 96v2M196.5 500v2M196.5 510v2M197.5 88v2M197.5 98v2M197.5 508v2M198.5 90v2M198.5 506v2M199.5 92v2M199.5 504v2M200.5 94v2M200.5 502v2M201.5 96v2M203.5 83v2M203.5 514v2M204.5 85v2M204.5 512v2M205.5 87v2M205.5 510v2M206.5 80v2M206.5 89v2M206.5 508v2M206.5 517v2M207.5 82v2M207.5 91v2M207.5 506v2M207.5 515v2M208.5 84v2M208.5 512v3M209.5 86v3M209.5 510v2M210.5 78v2M210.5 89v2M210.5 508v2M210.5 519v2M211.5 80v2M211.5 91v2M211.5 506v2M211.5 517v2M212.5 82v3M212.5 514v3M213.5 85v3M213.5 511v3M214.5 88v2M214.5 509v2M215.5 78v2M215.5 519v2M216.5 80v3M216.5 516v3M217.5 83v3M217.5 513v3M218.5 86v2M218.5 511v2M219.5 88v2M219.5 509v2M222.5 74v2M222.5 523v2M223.5 76v3M223.5 520v3M224.5 79v3M224.5 517v3M225.5 82v3M225.5 514v3M226.5 85v2M226.5 512v2M227.5 74v3M227.5 522v3M228.5 77v4M228.5 518v4M229.5 81v3M229.5 515v3M230.5 71v2M230.5 84v2M230.5 513v2M230.5 526v2M231.5 73v3M231.5 523v3M232.5 76v4M232.5 519v4M233.5 80v3M233.5 516v3M234.5 70v3M234.5 83v2M234.5 514v2M234.5 526v3M235.5 73v4M235.5 522v4M236.5 77v4M236.5 518v4M237.5 81v3M237.5 515v3M242.5 68v3M242.5 528v3M243.5 71v4M243.5 524v4M244.5 75v4M244.5 520v4M245.5 79v3M245.5 517v3M246.5 67v3M246.5 529v3M247.5 70v4M247.5 525v4M248.5 74v4M248.5 521v4M249.5 78v3M249.5 518v3M250.5 66v3M250.5 530v3M251.5 69v4M251.5 526v4M252.5 73v4M252.5 522v4M253.5 77v3M253.5 519v3M254.5 65v3M254.5 530v4M255.5 68v4M255.5 524v6M256.5 72v4M256.5 520v4M257.5 76v3M262.5 64v3M262.5 532v3M263.5 67v7M263.5 525v7M264.5 74v4M264.5 521v4M266.5 63v4M266.5 532v4M267.5 67v6M267.5 526v6M268.5 73v4M268.5 522v4M270.5 63v3M270.5 533v3M271.5 66v7M271.5 526v7M272.5 73v4M272.5 522v4M275.5 62v7M275.5 530v7M276.5 69v7M276.5 523v7M283.5 62v6M283.5 530v7M284.5 68v8M284.5 523v7M287.5 61v7M287.5 530v8M288.5 68v7M288.5 524v6M291.5 61v7M291.5 531v7M292.5 68v7M292.5 524v7M295.5 61v7M295.5 531v7M296.5 68v7M296.5 524v7M302.5 68v7M302.5 524v7M303.5 61v7M303.5 531v7M306.5 68v7M306.5 524v7M307.5 61v7M307.5 531v7M310.5 68v7M310.5 524v6M311.5 61v7M311.5 530v8M314.5 68v8M314.5 523v7M315.5 62v6M315.5 530v7M322.5 69v7M322.5 523v7M323.5 62v7M323.5 530v7M326.5 73v4M326.5 522v4M327.5 66v7M327.5 526v7M328.5 63v3M328.5 533v3M330.5 73v4M330.5 522v4M331.5 67v6M331.5 526v6M332.5 63v4M332.5 532v4M334.5 74v4M334.5 521v4M335.5 67v7M335.5 525v7M336.5 64v3M336.5 532v3M341.5 520v3M342.5 75v4M342.5 523v4M343.5 69v6M343.5 527v4M344.5 65v4M344.5 448v2M344.5 531v3M345.5 77v3M345.5 450v4M345.5 519v3M346.5 73v4M346.5 454v4M346.5 522v4M347.5 69v4M347.5 458v2M347.5 526v4M348.5 66v3M348.5 530v3M349.5 78v3M349.5 518v3M350.5 74v4M350.5 521v4M351.5 70v4M351.5 525v4M352.5 67v3M352.5 529v3M353.5 79v3M353.5 517v3M354.5 75v4M354.5 520v4M355.5 71v4M355.5 524v4M356.5 68v3M356.5 528v3M361.5 81v3M361.5 515v3M362.5 77v4M362.5 518v4M363.5 73v4M363.5 522v4M364.5 70v3M364.5 83v2M364.5 514v2M364.5 526v3M365.5 80v3M365.5 516v3M366.5 76v4M366.5 519v4M367.5 73v3M367.5 523v3M368.5 71v2M368.5 84v2M368.5 513v2M368.5 526v2M369.5 81v3M369.5 515v3M370.5 77v4M370.5 518v4M371.5 74v3M371.5 522v3M372.5 85v2M372.5 512v2M373.5 82v3M373.5 514v3M374.5 79v3M374.5 517v3M375.5 76v3M375.5 520v3M376.5 74v2M376.5 523v2M379.5 88v2M379.5 509v2M380.5 86v2M380.5 511v2M381.5 83v3M381.5 513v3M382.5 80v3M382.5 516v3M383.5 78v2M383.5 519v2M384.5 88v2M384.5 509v2M385.5 85v3M385.5 511v3M386.5 82v3M386.5 514v3M387.5 80v2M387.5 91v2M387.5 506v2M387.5 517v2M388.5 78v2M388.5 89v2M388.5 508v2M388.5 519v2M389.5 86v3M389.5 510v2M390.5 84v2M390.5 512v3M391.5 82v2M391.5 91v2M391.5 506v2M391.5 515v2M392.5 80v2M392.5 89v2M392.5 508v2M392.5 517v2M393.5 87v2M393.5 510v2M394.5 85v2M394.5 512v2M395.5 83v2M395.5 514v2M397.5 96v2M398.5 94v2M398.5 502v2M399.5 92v2M399.5 504v2M400.5 90v2M400.5 506v2M401.5 88v2M401.5 98v2M401.5 508v2M402.5 86v2M402.5 96v2M402.5 500v2M402.5 510v2M403.5 94v2M403.5 502v2M403.5 512v2M404.5 92v2M404.5 504v2M405.5 90v2M405.5 99v2M405.5 498v2M405.5 506v2M406.5 88v2M406.5 97v2M406.5 500v2M406.5 508v2M407.5 95v2M407.5 510v2M408.5 503v2M409.5 92v2M409.5 100v2M409.5 497v2M409.5 505v2M410.5 90v2M410.5 98v2M410.5 499v2M410.5 507v2M411.5 96v2M411.5 501v2M412.5 94v2M412.5 503v2M413.5 92v2M413.5 505v2M416.5 104v2M416.5 493v2M418.5 101v2M418.5 496v2M419.5 99v2M419.5 106v2M419.5 491v2M419.5 498v2M421.5 96v2M421.5 103v2M421.5 494v2M421.5 501v2M422.5 101v2M422.5 109v2M422.5 488v2M422.5 496v2M424.5 98v2M424.5 106v2M424.5 491v2M424.5 499v2M425.5 486v2M426.5 103v2M426.5 111v2M426.5 494v2M427.5 109v2M427.5 489v2M428.5 100v2M428.5 107v2M428.5 497v2M429.5 492v2M430.5 104v2M431.5 102v2M431.5 495v2M432.5 115v2M432.5 482v2M435.5 111v2M435.5 118v2M435.5 479v2M435.5 486v2M438.5 107v2M438.5 114v2M438.5 483v2M438.5 490v2M439.5 119v2M439.5 478v2M441.5 110v2M441.5 487v2M444.5 113v2M444.5 119v2M444.5 484v2M445.5 479v2M450.5 124v2M451.5 474v2M453.5 127v2M454.5 471v2M456.5 130v2M457.5 468v2M466.5 460v2"/>
<path stroke="#ff0000" d="M461 90.5h3M471 90.5h3M460 91.5h1M464 91.5h1M470 91.5h1M474 91.5h1M460 95.5h1M474 95.5h1M461 96.5h1M473 96.5h1M747 106.5h3M746 107.5h1M750 107.5h1M744 112.5h1M745 113.5h1M751 113.5h1M752 114.5h1M377 126.5h1M376 127.5h1M366 128.5h2M368 129.5h1M365 140.5h15M750 146.5h3M751 147.5h1M750 148.5h1M745 149.5h1M749 149.5h1M746 150.5h1M748 150.5h1M747 151.5h1M746 152.5h1M748 152.5h1M745 153.5h1M749 153.5h1M744 154.5h1M301 157.5h1M300 158.5h1M306 158.5h1M299 159.5h1M298 160.5h1M297 161.5h1M296 162.5h1M310 162.5h1M359 162.5h1M295 163.5h1M294 164.5h1M293 165.5h1M292 166.5h1M314 166.5h1M291 167.5h1M290 168.5h1M289 169.5h1M318 169.5h1M288 170.5h1M287 171.5h1M286 172.5h1M284 173.5h2M322 173.5h1M283 174.5h1M282 175.5h1M281 176.5h1M280 177.5h1M326 177.5h1M279 178.5h1M278 179.5h1M277 180.5h1M276 181.5h1M330 181.5h1M275 182.5h1M274 183.5h1M273 184.5h1M272 185.5h1M334 185.5h1M271 186.5h1M745 186.5h2M750 186.5h2M270 187.5h1M269 188.5h1M338 188.5h1M268 189.5h1M745 189.5h1M751 189.5h1M267 190.5h1M266 191.5h1M265 192.5h1M342 192.5h1M264 193.5h1M263 194.5h1M262 195.5h1M261 196.5h1M346 196.5h1M260 197.5h1M259 198.5h1M258 199.5h1M257 200.5h1M350 200.5h1M256 201.5h1M255 202.5h1M254 203.5h1M253 204.5h1M354 204.5h1M252 205.5h1M251 206.5h1M250 207.5h1M249 208.5h1M358 208.5h1M247 209.5h2M246 210.5h1M245 211.5h1M362 211.5h1M244 212.5h1M243 213.5h1M242 214.5h1M241 215.5h1M366 215.5h1M240 216.5h1M239 217.5h1M238 218.5h1M237 219.5h1M370 219.5h1M415 219.5h1M236 220.5h1M235 221.5h1M234 222.5h1M414 222.5h1M233 223.5h1M374 223.5h1M232 224.5h1M231 225.5h1M230 226.5h1M229 227.5h1M378 227.5h2M228 228.5h1M414 228.5h1M227 229.5h1M226 230.5h1M225 231.5h1M381 231.5h2M224 232.5h1M223 233.5h1M222 234.5h1M386 234.5h1M413 234.5h1M221 235.5h1M220 236.5h1M747 236.5h3M219 237.5h1M745 237.5h2M750 237.5h2M218 238.5h1M390 238.5h1M217 239.5h1M216 240.5h1M412 240.5h1M748 240.5h1M215 241.5h1M214 242.5h1M394 242.5h1M213 243.5h1M745 243.5h2M750 243.5h2M212 244.5h1M747 244.5h3M210 245.5h2M39 246.5h5M209 246.5h1M398 246.5h1M412 246.5h1M38 247.5h1M44 247.5h1M208 247.5h1M37 248.5h1M45 248.5h1M207 248.5h1M36 249.5h1M46 249.5h1M206 249.5h1M205 250.5h1M402 250.5h1M204 251.5h1M203 252.5h1M411 252.5h1M202 253.5h1M201 254.5h1M406 254.5h1M36 255.5h1M46 255.5h1M200 255.5h1M199 256.5h1M198 257.5h1M410 257.5h1M33 258.5h1M197 258.5h1M411 258.5h1M34 259.5h1M36 259.5h1M46 259.5h1M196 259.5h1M35 260.5h1M47 260.5h1M195 260.5h1M48 261.5h1M194 261.5h1M414 261.5h1M49 262.5h1M193 262.5h1M192 263.5h1M191 264.5h1M410 264.5h1M190 265.5h1M418 265.5h1M189 266.5h1M188 267.5h1M187 268.5h1M186 269.5h1M422 269.5h1M185 270.5h1M409 270.5h2M184 271.5h1M183 272.5h1M182 273.5h1M426 273.5h1M181 274.5h1M180 275.5h1M179 276.5h1M409 276.5h1M750 276.5h3M178 277.5h1M430 277.5h1M751 277.5h1M177 278.5h1M750 278.5h1M176 279.5h1M746 279.5h2M749 279.5h1M175 280.5h1M745 280.5h1M748 280.5h1M173 281.5h2M172 282.5h1M408 282.5h2M171 283.5h1M745 283.5h1M748 283.5h1M170 284.5h1M438 284.5h1M746 284.5h2M169 285.5h1M168 286.5h1M751 286.5h1M167 287.5h1M745 287.5h2M166 288.5h1M408 288.5h1M165 289.5h1M164 290.5h1M408 290.5h1M163 291.5h1M407 291.5h1M162 292.5h1M161 293.5h1M745 293.5h8M160 294.5h1M407 294.5h1M159 295.5h1M158 296.5h1M157 297.5h1M149 299.5h1M155 299.5h1M406 300.5h1M407 302.5h1M406 303.5h1M406 306.5h1M405 312.5h1M406 314.5h1M405 315.5h1M405 318.5h1M404 321.5h1M405 322.5h1M404 324.5h1M403 330.5h2M403 333.5h1M404 334.5h1M403 336.5h1M402 342.5h2M402 348.5h1M402 350.5h1M401 351.5h1M401 354.5h2M430 357.5h1M429 358.5h1M426 359.5h3M400 360.5h1M424 360.5h2M436 360.5h1M421 361.5h3M401 362.5h1M418 362.5h3M400 363.5h1M415 363.5h3M413 364.5h2M461 364.5h5M410 365.5h3M459 365.5h2M466 365.5h2M400 366.5h2M407 366.5h1M409 366.5h1M458 366.5h1M468 366.5h1M404 367.5h3M457 367.5h1M469 367.5h1M402 368.5h2M167 369.5h1M399 369.5h3M396 370.5h3M393 371.5h3M391 372.5h2M399 372.5h1M463 372.5h1M388 373.5h3M385 374.5h3M400 374.5h1M143 375.5h6M382 375.5h3M399 375.5h1M147 376.5h1M379 376.5h3M146 377.5h1M377 377.5h2M457 377.5h1M469 377.5h1M145 378.5h1M374 378.5h1M376 378.5h1M399 378.5h1M458 378.5h1M468 378.5h1M144 379.5h1M371 379.5h3M459 379.5h2M466 379.5h2M143 380.5h1M368 380.5h3M461 380.5h5M135 381.5h5M142 381.5h1M366 381.5h2M398 381.5h1M134 382.5h1M140 382.5h2M363 382.5h3M399 382.5h1M133 383.5h1M360 383.5h3M357 384.5h3M398 384.5h1M355 385.5h2M352 386.5h3M399 386.5h1M349 387.5h3M398 387.5h1M346 388.5h3M133 389.5h1M141 389.5h1M344 389.5h2M134 390.5h1M140 390.5h1M341 390.5h3M397 390.5h2M135 391.5h5M338 391.5h3M335 392.5h3M333 393.5h2M397 393.5h1M330 394.5h3M398 394.5h1M327 395.5h3M324 396.5h3M397 396.5h1M322 397.5h2M319 398.5h3M316 399.5h3M397 399.5h1M313 400.5h3M311 401.5h2M308 402.5h3M396 402.5h1M305 403.5h3M302 404.5h3M300 405.5h2M297 406.5h3M294 407.5h3M291 408.5h3M289 409.5h2M286 410.5h3M283 411.5h3M280 412.5h3M277 413.5h3M275 414.5h2M272 415.5h3M269 416.5h3M266 417.5h3M264 418.5h2M261 419.5h3M258 420.5h3M255 421.5h3M253 422.5h2M250 423.5h3M247 424.5h3M244 425.5h3M242 426.5h2M239 427.5h3M237 428.5h2M392 538.5h5M395 539.5h1M394 540.5h1M393 541.5h1M392 542.5h1M391 543.5h1M382 544.5h1M390 544.5h1M383 545.5h1M389 545.5h1M384 546.5h1M388 546.5h1M385 547.5h1M387 547.5h1M386 548.5h1M385 549.5h1M387 549.5h1M384 550.5h1M388 550.5h1M383 551.5h1M389 551.5h1M382 552.5h1M390 552.5h1M381 553.5h1M380 554.5h1M35.5 250v5M37.5 256v3M45.5 256v3M47.5 250v5M132.5 384v5M141.5 383v1M142.5 384v5M148.5 376v5M356.5 167v2M357.5 169v2M358.5 171v3M359.5 174v3M360.5 177v2M361.5 179v3M362.5 182v2M363.5 184v3M364.5 187v2M365.5 139v1M365.5 189v3M366.5 137v2M366.5 192v3M367.5 135v2M367.5 195v2M368.5 133v2M368.5 197v3M369.5 130v3M369.5 200v2M370.5 202v3M371.5 205v3M372.5 208v2M373.5 210v3M374.5 213v2M375.5 128v12M375.5 141v2M375.5 215v3M376.5 218v2M377.5 220v3M378.5 223v3M379.5 226v1M380.5 228v3M381.5 232v1M382.5 233v3M383.5 236v2M384.5 238v3M385.5 241v3M386.5 244v2M387.5 246v3M388.5 249v2M389.5 251v3M390.5 254v3M391.5 257v2M392.5 259v3M393.5 262v2M394.5 264v3M395.5 267v2M396.5 269v3M396.5 539v4M397.5 272v3M398.5 275v2M399.5 277v3M400.5 280v2M400.5 370v1M401.5 282v3M401.5 357v2M402.5 285v3M402.5 345v2M403.5 288v2M403.5 338v2M404.5 290v3M404.5 326v2M405.5 293v2M406.5 295v3M406.5 309v2M407.5 297v3M408.5 285v2M408.5 300v3M409.5 273v2M409.5 278v2M409.5 303v3M410.5 261v2M410.5 266v2M410.5 306v2M411.5 254v2M411.5 308v3M412.5 242v2M412.5 249v2M412.5 311v2M413.5 230v2M413.5 237v2M413.5 313v3M414.5 225v2M414.5 316v2M415.5 318v3M416.5 321v3M417.5 324v2M418.5 326v3M420.5 331v3M421.5 334v3M422.5 337v2M423.5 339v3M424.5 342v2M425.5 344v3M426.5 347v2M427.5 349v3M428.5 352v3M429.5 355v2M455.5 370v5M456.5 368v2M456.5 375v2M459.5 92v3M465.5 92v3M466.5 95v4M467.5 98v9M468.5 95v4M469.5 92v3M470.5 368v2M470.5 375v2M471.5 370v5M475.5 92v3M744.5 187v2M744.5 239v3M744.5 281v2M745.5 108v3M745.5 238v1M745.5 242v1M745.5 292v1M746.5 111v2M746.5 290v2M747.5 187v3M747.5 288v2M748.5 190v5M749.5 187v3M749.5 281v2M750.5 111v2M750.5 287v6M750.5 294v1M751.5 108v3M751.5 238v1M751.5 242v1M752.5 147v2M752.5 187v2M752.5 239v3M752.5 277v2"/>
<path stroke="#00ff00" d="M204 44.5h1M218 44.5h1M205 45.5h1M217 45.5h1M206 46.5h2M209 46.5h5M215 46.5h2M206 58.5h2M209 58.5h5M215 58.5h2M205 59.5h1M217 59.5h1M204 60.5h1M218 60.5h1M747 128.5h3M744 131.5h4M749 131.5h4M744 133.5h9M303 155.5h1M304 157.5h1M300 160.5h1M306 161.5h1M298 163.5h1M308 165.5h1M310 166.5h1M752 166.5h1M309 167.5h1M745 167.5h2M748 167.5h2M295 168.5h1M747 168.5h2M750 168.5h2M310 169.5h1M744 169.5h1M312 170.5h1M352 170.5h1M293 171.5h1M311 171.5h1M357 171.5h1M752 171.5h1M348 172.5h1M745 172.5h2M748 172.5h2M312 173.5h1M747 173.5h2M750 173.5h2M315 174.5h1M744 174.5h1M313 175.5h1M344 175.5h1M290 176.5h1M314 177.5h1M358 177.5h1M317 178.5h1M340 178.5h1M288 179.5h1M315 179.5h1M336 180.5h1M316 181.5h1M320 182.5h1M317 183.5h1M332 183.5h1M359 183.5h1M285 184.5h1M318 185.5h1M328 185.5h1M438 185.5h1M450 185.5h1M322 186.5h1M439 186.5h1M449 186.5h1M319 187.5h1M324 188.5h1M282 189.5h1M320 189.5h1M360 189.5h1M325 190.5h1M320 191.5h2M440 191.5h9M280 192.5h1M316 193.5h1M322 193.5h1M327 194.5h1M439 194.5h1M449 194.5h1M323 195.5h1M361 195.5h1M438 195.5h1M450 195.5h1M312 196.5h1M277 197.5h1M324 197.5h1M443 197.5h1M445 197.5h1M330 198.5h1M361 198.5h1M308 199.5h1M325 199.5h1M362 199.5h1M275 200.5h1M304 201.5h1M326 201.5h1M362 201.5h1M443 201.5h3M332 202.5h1M327 203.5h1M300 204.5h1M272 205.5h1M328 205.5h1M296 206.5h1M335 206.5h1M745 206.5h1M752 206.5h1M329 207.5h1M363 207.5h1M746 207.5h1M748 207.5h2M751 207.5h1M270 208.5h1M292 209.5h1M330 209.5h1M337 210.5h1M363 210.5h1M419 210.5h1M331 211.5h1M364 211.5h1M288 212.5h1M267 213.5h1M332 213.5h1M364 213.5h1M746 213.5h1M748 213.5h2M751 213.5h1M284 214.5h1M340 214.5h1M745 214.5h1M752 214.5h1M333 215.5h1M280 217.5h1M334 217.5h1M264 218.5h1M342 218.5h1M335 219.5h1M365 219.5h1M276 220.5h1M262 221.5h1M336 221.5h1M272 222.5h1M345 222.5h1M365 222.5h1M337 223.5h1M366 223.5h1M268 225.5h1M338 225.5h1M366 225.5h1M259 226.5h1M347 226.5h1M264 227.5h1M339 227.5h1M257 229.5h1M340 229.5h1M260 230.5h1M350 230.5h1M341 231.5h1M367 231.5h1M255 233.5h2M342 233.5h1M254 234.5h1M352 234.5h1M367 234.5h1M252 235.5h2M343 235.5h1M368 235.5h1M252 237.5h1M344 237.5h1M368 237.5h1M248 238.5h1M355 238.5h1M345 239.5h1M244 241.5h1M346 241.5h1M249 242.5h1M357 242.5h1M240 243.5h1M347 243.5h1M369 243.5h1M348 245.5h1M236 246.5h1M360 246.5h1M369 246.5h1M246 247.5h1M349 247.5h1M370 247.5h1M232 248.5h1M350 249.5h1M370 249.5h1M472 249.5h5M244 250.5h1M362 250.5h1M471 250.5h1M477 250.5h1M228 251.5h1M351 251.5h1M371 251.5h1M370 252.5h1M352 253.5h1M224 254.5h1M365 254.5h1M241 255.5h1M353 255.5h1M371 255.5h1M220 256.5h1M471 256.5h1M477 256.5h1M746 256.5h1M750 256.5h1M354 257.5h1M472 257.5h2M475 257.5h2M747 257.5h3M239 258.5h1M367 258.5h1M371 258.5h1M216 259.5h1M355 259.5h1M372 259.5h1M356 261.5h1M372 261.5h1M470 261.5h9M747 261.5h1M749 261.5h1M212 262.5h1M370 262.5h1M236 263.5h1M357 263.5h1M373 263.5h1M746 263.5h5M208 264.5h1M372 264.5h1M444 264.5h1M358 265.5h1M234 266.5h1M372 266.5h1M747 266.5h3M204 267.5h1M359 267.5h1M373 267.5h1M200 269.5h1M361 269.5h1M373 270.5h1M375 270.5h1M747 270.5h1M749 270.5h1M231 271.5h1M362 271.5h1M374 271.5h1M196 272.5h1M746 272.5h5M363 273.5h1M374 273.5h1M229 274.5h1M377 274.5h1M192 275.5h1M364 275.5h1M375 275.5h1M374 276.5h1M188 277.5h1M365 277.5h1M380 278.5h1M226 279.5h1M366 279.5h1M375 279.5h1M184 280.5h1M367 281.5h1M375 282.5h1M382 282.5h1M180 283.5h1M368 283.5h1M376 283.5h1M223 284.5h1M176 285.5h1M369 285.5h1M376 285.5h1M385 286.5h1M221 287.5h1M370 287.5h1M377 287.5h1M172 288.5h1M376 288.5h1M371 289.5h1M440 289.5h2M168 290.5h1M387 290.5h1M439 290.5h1M372 291.5h1M377 291.5h1M437 291.5h2M218 292.5h1M436 292.5h1M164 293.5h1M373 293.5h1M434 293.5h2M377 294.5h1M390 294.5h1M433 294.5h1M216 295.5h1M374 295.5h1M378 295.5h1M432 295.5h1M160 296.5h1M430 296.5h2M375 297.5h1M378 297.5h1M156 298.5h1M392 298.5h1M427 298.5h2M376 299.5h1M379 299.5h1M426 299.5h1M213 300.5h1M378 300.5h1M425 300.5h1M377 301.5h1M423 301.5h1M395 302.5h1M421 302.5h2M211 303.5h1M378 303.5h3M420 303.5h1M418 304.5h2M417 305.5h1M397 306.5h1M415 306.5h2M745 306.5h1M751 306.5h1M380 307.5h1M414 307.5h1M208 308.5h1M412 308.5h2M380 309.5h2M746 309.5h5M400 310.5h1M410 310.5h1M381 311.5h2M408 311.5h2M745 311.5h1M751 311.5h1M380 312.5h1M407 312.5h1M747 312.5h1M749 312.5h1M205 313.5h1M383 313.5h1M405 313.5h2M404 314.5h1M748 314.5h1M381 315.5h2M384 315.5h1M402 315.5h2M203 316.5h1M401 316.5h1M385 317.5h1M399 317.5h2M381 318.5h1M398 318.5h1M382 319.5h1M386 319.5h1M396 319.5h2M395 320.5h1M200 321.5h1M382 321.5h1M387 321.5h1M393 321.5h2M392 322.5h1M407 322.5h1M383 323.5h1M388 323.5h1M391 323.5h1M198 324.5h1M382 324.5h1M389 324.5h2M388 325.5h2M386 326.5h2M410 326.5h1M383 327.5h3M390 327.5h1M383 328.5h2M195 329.5h1M382 329.5h1M391 329.5h1M380 330.5h2M383 330.5h1M412 330.5h1M379 331.5h1M384 331.5h1M392 331.5h1M193 332.5h1M377 332.5h2M376 333.5h1M384 333.5h1M393 333.5h1M374 334.5h2M415 334.5h1M373 335.5h1M385 335.5h1M394 335.5h1M371 336.5h2M384 336.5h1M565 336.5h1M190 337.5h1M370 337.5h1M395 337.5h1M552 337.5h1M558 337.5h1M564 337.5h1M369 338.5h1M367 339.5h2M385 339.5h2M396 339.5h1M554 339.5h1M560 339.5h1M366 340.5h1M364 341.5h2M397 341.5h1M550 341.5h1M556 341.5h1M562 341.5h1M187 342.5h1M363 342.5h1M385 342.5h1M420 342.5h1M549 342.5h1M361 343.5h2M386 343.5h1M398 343.5h1M360 344.5h1M185 345.5h1M358 345.5h2M386 345.5h1M399 345.5h1M357 346.5h1M422 346.5h1M565 346.5h1M355 347.5h2M387 347.5h1M400 347.5h1M552 347.5h1M558 347.5h1M564 347.5h1M354 348.5h1M386 348.5h1M352 349.5h2M401 349.5h1M554 349.5h1M560 349.5h1M182 350.5h1M351 350.5h1M425 350.5h1M350 351.5h1M387 351.5h2M402 351.5h1M550 351.5h1M556 351.5h1M562 351.5h1M348 352.5h2M549 352.5h1M180 353.5h1M347 353.5h1M403 353.5h1M345 354.5h2M387 354.5h1M427 354.5h1M344 355.5h1M389 355.5h1M404 355.5h1M342 356.5h2M341 357.5h1M388 357.5h1M405 357.5h1M177 358.5h1M339 358.5h2M414 358.5h1M418 358.5h1M422 358.5h1M426 358.5h1M430 358.5h1M338 359.5h1M382 359.5h1M386 359.5h1M389 359.5h2M394 359.5h1M398 359.5h1M402 359.5h1M406 359.5h1M336 360.5h2M350 360.5h1M354 360.5h1M358 360.5h1M362 360.5h1M366 360.5h1M370 360.5h1M374 360.5h1M378 360.5h1M388 360.5h1M175 361.5h1M318 361.5h1M322 361.5h1M326 361.5h1M330 361.5h1M334 361.5h2M338 361.5h1M342 361.5h1M346 361.5h1M407 361.5h1M286 362.5h1M290 362.5h1M294 362.5h1M298 362.5h1M302 362.5h1M306 362.5h1M310 362.5h1M314 362.5h1M333 362.5h2M254 363.5h1M258 363.5h1M262 363.5h1M266 363.5h1M270 363.5h1M274 363.5h1M278 363.5h1M282 363.5h1M332 363.5h1M389 363.5h2M408 363.5h1M222 364.5h1M226 364.5h1M230 364.5h1M234 364.5h1M238 364.5h1M242 364.5h1M246 364.5h1M250 364.5h1M330 364.5h2M190 365.5h1M194 365.5h1M198 365.5h1M202 365.5h1M206 365.5h1M210 365.5h1M214 365.5h1M218 365.5h1M329 365.5h1M172 366.5h4M177 366.5h3M182 366.5h1M186 366.5h1M328 366.5h1M389 366.5h1M181 367.5h1M183 367.5h1M185 367.5h1M187 367.5h1M189 367.5h1M191 367.5h1M193 367.5h1M195 367.5h1M326 367.5h2M391 367.5h1M410 367.5h1M197 368.5h1M199 368.5h1M201 368.5h1M203 368.5h1M205 368.5h1M207 368.5h1M209 368.5h1M211 368.5h1M325 368.5h1M213 369.5h1M215 369.5h1M217 369.5h1M219 369.5h1M221 369.5h1M223 369.5h1M225 369.5h1M227 369.5h1M229 369.5h1M323 369.5h2M390 369.5h1M411 369.5h1M231 370.5h1M233 370.5h1M235 370.5h1M237 370.5h1M239 370.5h1M241 370.5h1M243 370.5h1M245 370.5h1M322 370.5h1M247 371.5h1M249 371.5h1M251 371.5h1M253 371.5h1M255 371.5h1M257 371.5h1M259 371.5h1M261 371.5h1M320 371.5h2M391 371.5h1M412 371.5h1M263 372.5h1M265 372.5h1M267 372.5h1M269 372.5h1M271 372.5h1M273 372.5h1M275 372.5h1M277 372.5h1M319 372.5h1M390 372.5h1M279 373.5h1M281 373.5h1M283 373.5h1M285 373.5h1M287 373.5h1M289 373.5h1M291 373.5h1M293 373.5h1M317 373.5h2M413 373.5h1M295 374.5h1M297 374.5h1M299 374.5h1M301 374.5h1M303 374.5h1M305 374.5h1M307 374.5h1M309 374.5h1M316 374.5h1M311 375.5h1M313 375.5h3M317 375.5h1M319 375.5h1M321 375.5h1M323 375.5h1M325 375.5h1M327 375.5h1M391 375.5h2M414 375.5h1M329 376.5h1M331 376.5h1M333 376.5h1M335 376.5h1M337 376.5h1M339 376.5h1M341 376.5h1M343 376.5h1M311 377.5h2M345 377.5h1M347 377.5h1M349 377.5h1M351 377.5h1M353 377.5h1M355 377.5h1M357 377.5h1M359 377.5h1M415 377.5h1M310 378.5h1M361 378.5h1M363 378.5h1M365 378.5h1M367 378.5h1M369 378.5h1M371 378.5h1M373 378.5h1M375 378.5h1M309 379.5h1M377 379.5h1M379 379.5h1M381 379.5h1M383 379.5h1M385 379.5h1M387 379.5h1M389 379.5h1M416 379.5h1M307 380.5h2M395 380.5h1M397 380.5h1M399 380.5h1M401 380.5h1M403 380.5h1M405 380.5h1M407 380.5h1M306 381.5h1M392 381.5h1M409 381.5h1M411 381.5h1M413 381.5h1M415 381.5h1M417 381.5h1M304 382.5h2M303 383.5h1M393 383.5h1M301 384.5h2M392 384.5h1M300 385.5h1M421 385.5h1M298 386.5h2M297 387.5h1M393 387.5h2M295 388.5h2M294 389.5h1M292 390.5h2M393 390.5h1M291 391.5h1M395 391.5h1M289 392.5h2M288 393.5h1M394 393.5h1M287 394.5h1M442 394.5h1M450 394.5h1M285 395.5h2M395 395.5h1M443 395.5h1M449 395.5h1M284 396.5h1M394 396.5h1M444 396.5h5M282 397.5h2M443 397.5h1M449 397.5h1M281 398.5h1M279 399.5h2M395 399.5h2M278 400.5h1M276 401.5h2M275 402.5h1M395 402.5h1M273 403.5h2M443 403.5h1M449 403.5h1M272 404.5h1M444 404.5h2M447 404.5h2M270 405.5h2M269 406.5h1M268 407.5h1M266 408.5h2M442 408.5h9M265 409.5h1M263 410.5h2M262 411.5h1M260 412.5h2M259 413.5h1M257 414.5h2M256 415.5h1M254 416.5h2M253 417.5h1M251 418.5h2M250 419.5h1M248 420.5h2M247 421.5h1M246 422.5h1M244 423.5h2M243 424.5h1M241 425.5h2M240 426.5h1M238 427.5h1M129 496.5h5M128 497.5h1M134 497.5h1M123 502.5h7M133 502.5h7M123 506.5h17M127.5 498v3M128.5 501v1M134.5 501v1M135.5 498v3M173.5 364v2M174.5 362v2M176.5 359v2M178.5 356v2M179.5 354v2M181.5 351v2M183.5 348v2M184.5 346v2M186.5 343v2M188.5 340v2M189.5 338v2M191.5 335v2M192.5 333v2M194.5 330v2M196.5 327v2M197.5 325v2M199.5 322v2M201.5 319v2M202.5 317v2M204.5 314v2M206.5 311v2M207.5 309v2M208.5 46v13M209.5 306v2M210.5 304v2M212.5 301v2M214.5 46v13M214.5 298v2M215.5 296v2M217.5 293v2M219.5 290v2M220.5 288v2M222.5 285v2M224.5 282v2M225.5 280v2M227.5 277v2M228.5 275v2M230.5 272v2M232.5 269v2M233.5 267v2M235.5 264v2M237.5 261v2M238.5 259v2M240.5 256v2M242.5 253v2M243.5 251v2M245.5 248v2M247.5 245v2M248.5 243v2M250.5 240v2M251.5 238v2M253.5 236v1M255.5 232v1M256.5 230v2M258.5 227v2M260.5 224v2M261.5 222v2M263.5 219v2M265.5 216v2M266.5 214v2M268.5 211v2M269.5 209v2M271.5 206v2M273.5 203v2M274.5 201v2M276.5 198v2M278.5 195v2M279.5 193v2M281.5 190v2M283.5 187v2M284.5 185v2M286.5 182v2M287.5 180v2M289.5 177v2M291.5 174v2M292.5 172v2M294.5 169v2M296.5 166v2M297.5 164v2M299.5 161v2M301.5 158v2M302.5 156v2M305.5 158v2M307.5 162v2M313.5 376v1M357.5 174v2M358.5 179v2M359.5 186v2M360.5 191v2M362.5 203v2M364.5 215v2M366.5 227v2M368.5 239v2M379.5 305v2M391.5 378v2M393.5 379v2M402.5 314v1M440.5 187v4M440.5 192v2M442.5 198v3M442.5 398v5M444.5 189v2M444.5 192v6M446.5 198v3M446.5 404v4M446.5 409v2M448.5 187v4M448.5 192v2M450.5 398v5M470.5 251v5M474.5 257v4M474.5 262v4M478.5 251v5M551.5 338v3M551.5 348v3M553.5 336v3M553.5 346v3M555.5 340v3M555.5 350v3M557.5 338v3M557.5 348v3M559.5 336v3M559.5 346v3M561.5 340v3M561.5 350v3M563.5 338v3M563.5 348v3M745.5 168v1M745.5 173v1M746.5 129v2M746.5 166v1M746.5 171v1M746.5 258v3M746.5 267v3M746.5 307v2M746.5 310v1M747.5 169v1M747.5 174v1M747.5 207v7M747.5 313v1M748.5 261v2M748.5 264v1M748.5 270v2M748.5 273v2M748.5 308v1M748.5 310v3M749.5 166v1M749.5 171v1M749.5 313v1M750.5 129v2M750.5 169v1M750.5 174v1M750.5 207v7M750.5 258v3M750.5 267v3M750.5 307v2M750.5 310v1M751.5 167v1M751.5 172v1"/>
<path stroke="#ffff00" d="M338 33.5h1M350 33.5h1M340 36.5h2M347 36.5h2M342 37.5h5M340 38.5h2M347 38.5h2M340 48.5h2M347 48.5h2M342 49.5h5M744 116.5h1M746 116.5h1M748 116.5h1M750 118.5h1M750 123.5h1M749 124.5h1M751 124.5h1M303 149.5h1M750 156.5h2M744 157.5h1M748 157.5h2M750 159.5h2M751 164.5h1M745 196.5h1M751 196.5h1M746 197.5h1M750 197.5h1M747 198.5h3M746 199.5h1M750 199.5h1M746 203.5h1M750 203.5h1M747 204.5h3M745 297.5h2M748 297.5h2M749 299.5h2M748 300.5h1M751 304.5h1M44 380.5h1M48 380.5h1M52 380.5h1M45 381.5h1M47 381.5h1M49 381.5h1M51 381.5h1M53 381.5h1M57 383.5h1M56 384.5h1M55 385.5h1M55 393.5h1M57 393.5h1M56 394.5h1M55 395.5h1M57 395.5h1M54 396.5h1M58 396.5h1M397 404.5h1M234 434.5h1M215 455.5h4M220 455.5h4M223 459.5h3M504 459.5h3M222 460.5h1M226 460.5h1M493 460.5h1M501 460.5h1M503 460.5h1M507 460.5h1M220 461.5h2M492 461.5h1M502 461.5h1M499 462.5h1M501 462.5h1M502 463.5h1M226 464.5h1M503 464.5h1M507 464.5h1M504 465.5h3M506 467.5h1M226 468.5h1M495 468.5h1M497 468.5h1M507 468.5h1M227 469.5h1M507 474.5h1M506 475.5h1M46.5 382v13M50.5 382v13M54.5 382v11M58.5 382v11M219.5 453v15M225.5 465v3M227.5 461v3M338.5 41v5M339.5 34v2M339.5 39v2M339.5 46v2M349.5 34v2M349.5 39v2M349.5 46v2M350.5 41v5M494.5 459v9M496.5 469v5M498.5 463v5M500.5 459v3M505.5 466v1M508.5 461v3M508.5 469v5M745.5 117v7M745.5 156v5M745.5 200v3M746.5 161v3M747.5 117v7M747.5 158v3M747.5 296v8M748.5 156v1M749.5 117v6M749.5 158v1M750.5 302v2M751.5 117v6M751.5 160v1M751.5 200v3M751.5 300v2M752.5 157v2M752.5 161v3"/>
<path stroke="#0000ff" d="M96 124.5h5M93 125.5h3M101 125.5h1M92 126.5h1M102 126.5h3M91 127.5h1M101 127.5h1M105 127.5h1M90 128.5h1M92 130.5h3M91 131.5h1M95 131.5h1M101 131.5h1M105 131.5h1M102 132.5h3M106 134.5h1M91 135.5h1M95 135.5h1M105 135.5h1M92 136.5h3M104 136.5h1M744 136.5h1M746 136.5h1M748 136.5h1M95 137.5h1M101 137.5h3M96 138.5h5M750 144.5h2M355 169.5h1M354 171.5h1M353 173.5h1M352 175.5h1M744 176.5h1M752 176.5h1M351 177.5h1M745 177.5h1M751 177.5h1M351 179.5h1M744 180.5h9M350 181.5h1M349 183.5h1M745 183.5h1M751 183.5h1M744 184.5h1M752 184.5h1M348 185.5h1M347 187.5h1M346 189.5h1M345 191.5h1M344 193.5h1M343 195.5h1M342 197.5h1M341 199.5h1M340 201.5h1M538 202.5h1M554 202.5h1M340 203.5h1M539 203.5h1M553 203.5h1M540 204.5h1M552 204.5h1M339 205.5h1M338 207.5h1M337 209.5h1M538 210.5h17M336 211.5h1M335 213.5h1M334 215.5h1M540 216.5h1M552 216.5h1M333 217.5h1M539 217.5h1M553 217.5h1M747 217.5h3M538 218.5h1M554 218.5h1M745 218.5h2M750 218.5h2M332 219.5h1M744 219.5h1M745 220.5h2M331 221.5h1M750 221.5h2M752 222.5h1M330 223.5h1M745 223.5h2M750 223.5h2M747 224.5h3M330 225.5h1M329 227.5h1M328 229.5h1M327 231.5h1M326 233.5h1M325 235.5h1M324 237.5h1M323 239.5h1M322 241.5h1M321 243.5h1M320 245.5h1M746 246.5h3M320 247.5h1M745 247.5h1M749 247.5h2M746 248.5h1M319 249.5h1M318 251.5h1M746 252.5h1M317 253.5h1M745 253.5h1M749 253.5h2M746 254.5h3M316 255.5h1M315 257.5h1M314 259.5h1M313 261.5h1M312 263.5h1M311 265.5h1M310 267.5h1M309 269.5h1M309 271.5h1M308 273.5h1M307 275.5h1M306 277.5h1M305 279.5h1M471 279.5h1M473 279.5h1M476 279.5h2M479 279.5h2M483 279.5h1M485 279.5h1M304 281.5h1M303 283.5h1M474 284.5h2M481 284.5h2M302 285.5h1M476 285.5h2M479 285.5h2M301 287.5h1M448 288.5h1M300 289.5h1M474 289.5h4M479 289.5h4M299 291.5h1M299 293.5h1M298 295.5h1M297 297.5h1M296 299.5h1M295 301.5h1M294 303.5h1M293 305.5h1M292 307.5h1M291 309.5h1M290 311.5h1M289 313.5h1M289 315.5h1M288 317.5h1M744 317.5h1M747 317.5h1M749 317.5h1M752 317.5h1M287 319.5h1M746 319.5h1M750 319.5h1M747 320.5h1M749 320.5h1M286 321.5h1M746 322.5h2M749 322.5h2M285 323.5h1M284 325.5h1M748 326.5h1M283 327.5h1M747 327.5h1M749 327.5h1M748 328.5h1M282 329.5h1M746 329.5h1M750 329.5h1M747 330.5h1M749 330.5h1M281 331.5h1M746 332.5h5M280 333.5h1M279 335.5h1M278 337.5h1M278 339.5h1M277 341.5h1M276 343.5h1M275 345.5h1M274 347.5h1M273 349.5h1M272 351.5h1M271 353.5h1M270 355.5h1M269 357.5h1M268 359.5h1M268 361.5h1M267 363.5h1M266 365.5h1M265 367.5h1M264 369.5h1M263 371.5h1M262 373.5h1M261 375.5h1M260 377.5h1M259 379.5h1M258 381.5h1M258 383.5h1M257 385.5h1M256 387.5h1M255 389.5h1M254 391.5h1M253 393.5h1M252 395.5h1M251 397.5h1M250 399.5h1M249 401.5h1M248 403.5h1M247 405.5h1M247 407.5h1M401 408.5h1M246 409.5h1M400 410.5h1M245 411.5h1M244 413.5h1M243 415.5h1M242 417.5h1M241 419.5h1M424 419.5h3M240 421.5h1M239 423.5h1M424 423.5h3M238 425.5h1M421 426.5h2M428 426.5h2M237 427.5h1M423 427.5h2M426 427.5h2M407 431.5h5M421 431.5h9M406 432.5h1M412 432.5h2M405 433.5h1M414 433.5h1M406 434.5h1M415 434.5h1M407 435.5h1M407 443.5h1M406 444.5h1M415 444.5h1M405 445.5h1M414 445.5h1M406 446.5h1M412 446.5h2M407 447.5h5M246 549.5h1M250 549.5h1M254 549.5h1M247 550.5h1M249 550.5h1M251 550.5h1M253 550.5h1M255 550.5h1M260 561.5h1M262 561.5h1M257 564.5h1M260 564.5h1M258 565.5h2M90.5 132v3M96.5 132v3M100.5 128v3M106.5 128v3M248.5 551v13M252.5 551v13M256.5 551v13M261.5 560v4M408.5 436v2M408.5 441v2M409.5 438v3M416.5 435v2M416.5 442v2M417.5 437v5M419.5 419v5M420.5 424v2M423.5 420v3M425.5 427v4M425.5 432v4M427.5 420v3M430.5 424v2M431.5 419v5M472.5 277v5M473.5 282v2M478.5 277v17M483.5 282v2M484.5 277v5M541.5 205v2M541.5 214v2M542.5 207v3M542.5 211v3M550.5 207v3M550.5 211v3M551.5 205v2M551.5 214v2M744.5 221v2M745.5 137v7M745.5 316v3M745.5 326v3M746.5 178v2M746.5 181v2M747.5 137v7M747.5 221v2M747.5 249v3M748.5 316v9M748.5 330v2M748.5 333v2M749.5 137v7M749.5 219v2M750.5 178v2M750.5 181v2M750.5 248v1M750.5 252v1M751.5 249v3M751.5 316v3M751.5 326v3M752.5 142v2M752.5 219v2"/>
<path stroke="#00ffff" d="M357 168.5h1M358 170.5h1M359 171.5h1M361 174.5h1M363 177.5h1M364 178.5h1M366 181.5h1M368 184.5h1M369 185.5h1M371 188.5h1M373 191.5h1M375 194.5h1M376 195.5h1M378 198.5h1M380 201.5h1M381 202.5h1M383 205.5h1M385 208.5h1M386 209.5h1M388 212.5h1M390 215.5h1M391 216.5h1M393 219.5h1M395 222.5h1M396 223.5h1M398 226.5h1M400 229.5h1M402 232.5h1M403 233.5h1M405 236.5h1M407 239.5h1M408 240.5h1M410 243.5h1M413 247.5h1M415 250.5h1M417 253.5h1M418 254.5h1M421 258.5h1M421 259.5h1M422 260.5h1M423 261.5h1M425 264.5h1M427 267.5h1M429 270.5h1M430 271.5h1M432 274.5h1M434 277.5h1M436 279.5h1M437 281.5h1M439 284.5h1M440 285.5h1M442 288.5h1M360.5 172v2M362.5 175v2M365.5 179v2M367.5 182v2M370.5 186v2M372.5 189v2M374.5 192v2M377.5 196v2M379.5 199v2M382.5 203v2M384.5 206v2M387.5 210v2M389.5 213v2M392.5 217v2M394.5 220v2M396.5 404v2M397.5 224v2M397.5 401v3M398.5 397v6M399.5 227v2M399.5 394v6M400.5 391v5M401.5 230v2M401.5 388v5M402.5 384v6M403.5 381v5M404.5 234v2M404.5 378v5M405.5 375v5M406.5 237v2M406.5 371v5M407.5 368v5M408.5 365v5M409.5 241v2M409.5 362v4M410.5 358v5M411.5 244v2M411.5 355v5M412.5 352v5M413.5 349v4M414.5 248v2M414.5 345v5M415.5 214v5M415.5 342v5M416.5 219v10M416.5 251v2M416.5 339v4M417.5 229v9M417.5 335v5M418.5 238v10M418.5 332v5M419.5 248v10M419.5 329v4M420.5 257v10M420.5 326v4M421.5 267v10M421.5 322v5M422.5 277v9M422.5 319v4M423.5 286v10M423.5 316v4M424.5 262v2M424.5 296v10M424.5 313v4M425.5 306v9M426.5 265v2M426.5 306v4M426.5 315v10M427.5 303v4M427.5 325v9M428.5 268v2M428.5 300v4M428.5 334v10M429.5 296v4M429.5 344v10M430.5 293v3M430.5 354v3M431.5 272v2M431.5 290v4M432.5 287v3M433.5 275v2M433.5 283v4M434.5 280v4M435.5 277v3M436.5 274v3M436.5 280v1M437.5 270v4M438.5 267v3M438.5 282v2M439.5 265v2M441.5 286v2"/>
<path stroke="#007f7f" d="M747 336.5h3M746 337.5h1M750 337.5h1M745 342.5h1M751 342.5h1M744 343.5h1M752 343.5h1M745 344.5h1M751 344.5h1M342 442.5h1M349 463.5h5M348 464.5h1M354 464.5h1M347 465.5h1M355 465.5h1M346 466.5h1M356 466.5h1M346 472.5h1M356 472.5h1M345 475.5h2M356 475.5h2M344 476.5h1M358 476.5h1M343 477.5h1M359 477.5h1M344 478.5h1M346 478.5h1M356 478.5h1M358 478.5h1M345 479.5h1M357 479.5h1M345.5 467v5M347.5 473v5M355.5 473v5M357.5 467v5M745.5 338v3M746.5 341v3M750.5 341v3M751.5 338v3"/>
<g stroke="none" shape-rendering="auto">
<text class="hn" transform="translate(96.2 351) scale(0.84 1)" text-anchor="middle" fill="#ff0000">1</text>
<text class="hn" transform="translate(143.2 442) scale(0.84 1)" text-anchor="middle" fill="#ffff00">2</text>
<text class="hn" transform="translate(237.2 504) scale(0.84 1)" text-anchor="middle" fill="#00ff00">3</text>
<text class="hn" transform="translate(352.2 507) scale(0.84 1)" text-anchor="middle" fill="#0000ff">4</text>
<text class="hn" transform="translate(450.2 451) scale(0.84 1)" text-anchor="middle" fill="#ff0000">5</text>
<text class="hn" transform="translate(503.2 356) scale(0.84 1)" text-anchor="middle" fill="#ffff00">6</text>
<text class="hn" transform="translate(504.2 257) scale(0.84 1)" text-anchor="middle" fill="#00ff00">7</text>
<text class="hn" transform="translate(457.2 166) scale(0.84 1)" text-anchor="middle" fill="#0000ff">8</text>
<text class="hn" transform="translate(363.2 104) scale(0.84 1)" text-anchor="middle" fill="#ff0000">9</text>
<text class="hn" transform="translate(248.2 101) scale(0.84 1)" text-anchor="middle" fill="#ffff00">10</text>
<text class="hn" transform="translate(150.2 157) scale(0.84 1)" text-anchor="middle" fill="#00ff00">11</text>
<text class="hn" transform="translate(97.2 252) scale(0.84 1)" text-anchor="middle" fill="#0000ff">12</text>
<text class="big" transform="translate(0 128) scale(0.5 1)" x="589.80 613.40" fill="#ffff00" font-size="24.7"><tspan textLength="22.4" lengthAdjust="spacingAndGlyphs">M</tspan><tspan textLength="13.4" lengthAdjust="spacingAndGlyphs">C</tspan></text>
<text class="big" transform="translate(0 308) scale(0.35 1)" x="316.86 336.00 353.14" fill="#ff0000" stroke="#ff0000" stroke-width="0.3" vector-effect="non-scaling-stroke" font-size="24.7"><tspan textLength="15.6" lengthAdjust="spacingAndGlyphs">A</tspan><tspan font-size="20.8" textLength="12.6" lengthAdjust="spacingAndGlyphs">s</tspan><tspan font-size="20.8" textLength="12.6" lengthAdjust="spacingAndGlyphs">c</tspan></text>
</g>
</svg>
<div id="side">
<div class="ln" style="top:0px"><span class="cw">Astrolog 5.40</span></div>
<div class="ln" style="top:10px"><span class="cl">"Anonymous"</span></div>
<div class="ln" style="top:20px"><span class="cl">Sat January 21, 2012</span></div>
<div class="ln" style="top:30px"><span class="cl"> 7:17pm (ST +8:00 GMT)</span></div>
<div class="ln" style="top:40px"><span class="cl">"Taiwan"</span></div>
<div class="ln" style="top:50px"><span class="cl">121°31E 25°03N</span></div>
<div class="ln" style="top:60px"><span class="cl">Placidus houses.</span></div>
<div class="ln" style="top:70px"><span class="cl">Tropical, Geocentric.</span></div>
<div class="ln" style="top:80px"><span class="cl">Julian Day = 2455947.9701</span></div>
<div class="ln" style="top:100px"><span class="cr"> 1st house: 25Leo00</span></div>
<div class="ln" style="top:110px"><span class="cy"> 2nd house: 21Vir22</span></div>
<div class="ln" style="top:120px"><span class="cG"> 3rd house: 21Lib19</span></div>
<div class="ln" style="top:130px"><span class="cb"> 4th house: 23Sco24</span></div>
<div class="ln" style="top:140px"><span class="cr"> 5th house: 25Sag18</span></div>
<div class="ln" style="top:150px"><span class="cy"> 6th house: 25Cap54</span></div>
<div class="ln" style="top:160px"><span class="cG"> 7th house: 25Aqu00</span></div>
<div class="ln" style="top:170px"><span class="cb"> 8th house: 21Pis22</span></div>
<div class="ln" style="top:180px"><span class="cr"> 9th house: 21Ari19</span></div>
<div class="ln" style="top:190px"><span class="cy">10th house: 23Tau24</span></div>
<div class="ln" style="top:200px"><span class="cG">11th house: 25Gem18</span></div>
<div class="ln" style="top:210px"><span class="cb">12th house: 25Can54</span></div>
<div class="ln" style="top:230px"><span class="cr"> Sun: </span><span class="cG"> 0Aqu49</span><span class="cw"> </span><span class="cl"> - 0°00'</span></div>
<div class="ln" style="top:240px"><span class="cb">Moon: </span><span class="cy"> 7Cap17</span><span class="cw"> </span><span class="cl"> + 2°05'</span></div>
<div class="ln" style="top:250px"><span class="cG">Merc: </span><span class="cy">19Cap56</span><span class="cw"> </span><span class="cl"> - 1°27'</span></div>
<div class="ln" style="top:260px"><span class="cG">Venu: </span><span class="cb"> 8Pis45</span><span class="cw"> </span><span class="cl"> - 1°23'</span></div>
<div class="ln" style="top:270px"><span class="cr">Mars: </span><span class="cy">23Vir03</span><span class="cw"> </span><span class="cl"> + 3°32'</span></div>
<div class="ln" style="top:280px"><span class="cr">Jupi: </span><span class="cy"> 1Tau27</span><span class="cw"> </span><span class="cl"> - 1°08'</span></div>
<div class="ln" style="top:290px"><span class="cy">Satu: </span><span class="cG">29Lib10</span><span class="cw"> </span><span class="cl"> + 2°31'</span></div>
<div class="ln" style="top:300px"><span class="cG">Uran: </span><span class="cr"> 1Ari24</span><span class="cw"> </span><span class="cl"> - 0°43'</span></div>
<div class="ln" style="top:310px"><span class="cb">Nept: </span><span class="cG">29Aqu31</span><span class="cw"> </span><span class="cl"> - 0°33'</span></div>
<div class="ln" style="top:320px"><span class="cb">Plut: </span><span class="cy"> 8Cap01</span><span class="cw"> </span><span class="cl"> + 3°54'</span></div>
<div class="ln" style="top:330px"><span class="cC">Node: </span><span class="cr">11Sag53</span><span class="cw">R</span><span class="cl"> + 0°00'</span></div>
<div class="ln" style="top:350px"><span class="cl">Fire: 3, Earth: 6,</span></div>
<div class="ln" style="top:360px"><span class="cl">Air : 3, Water: 1</span></div>
<div class="ln" style="top:370px"><span class="cl">Car: 5, Fix: 5, Mut: 3</span></div>
<div class="ln" style="top:380px"><span class="cl">Yang: 6, Yin: 7</span></div>
<div class="ln" style="top:390px"><span class="cl">M: 4, N: 7, A: 2, D: 9</span></div>
<div class="ln" style="top:400px"><span class="cl">Ang: 3, Suc: 5, Cad: 3</span></div>
<div class="ln" style="top:410px"><span class="cl">Learn: 5, Share: 8</span></div>
</div>
</body></html>
